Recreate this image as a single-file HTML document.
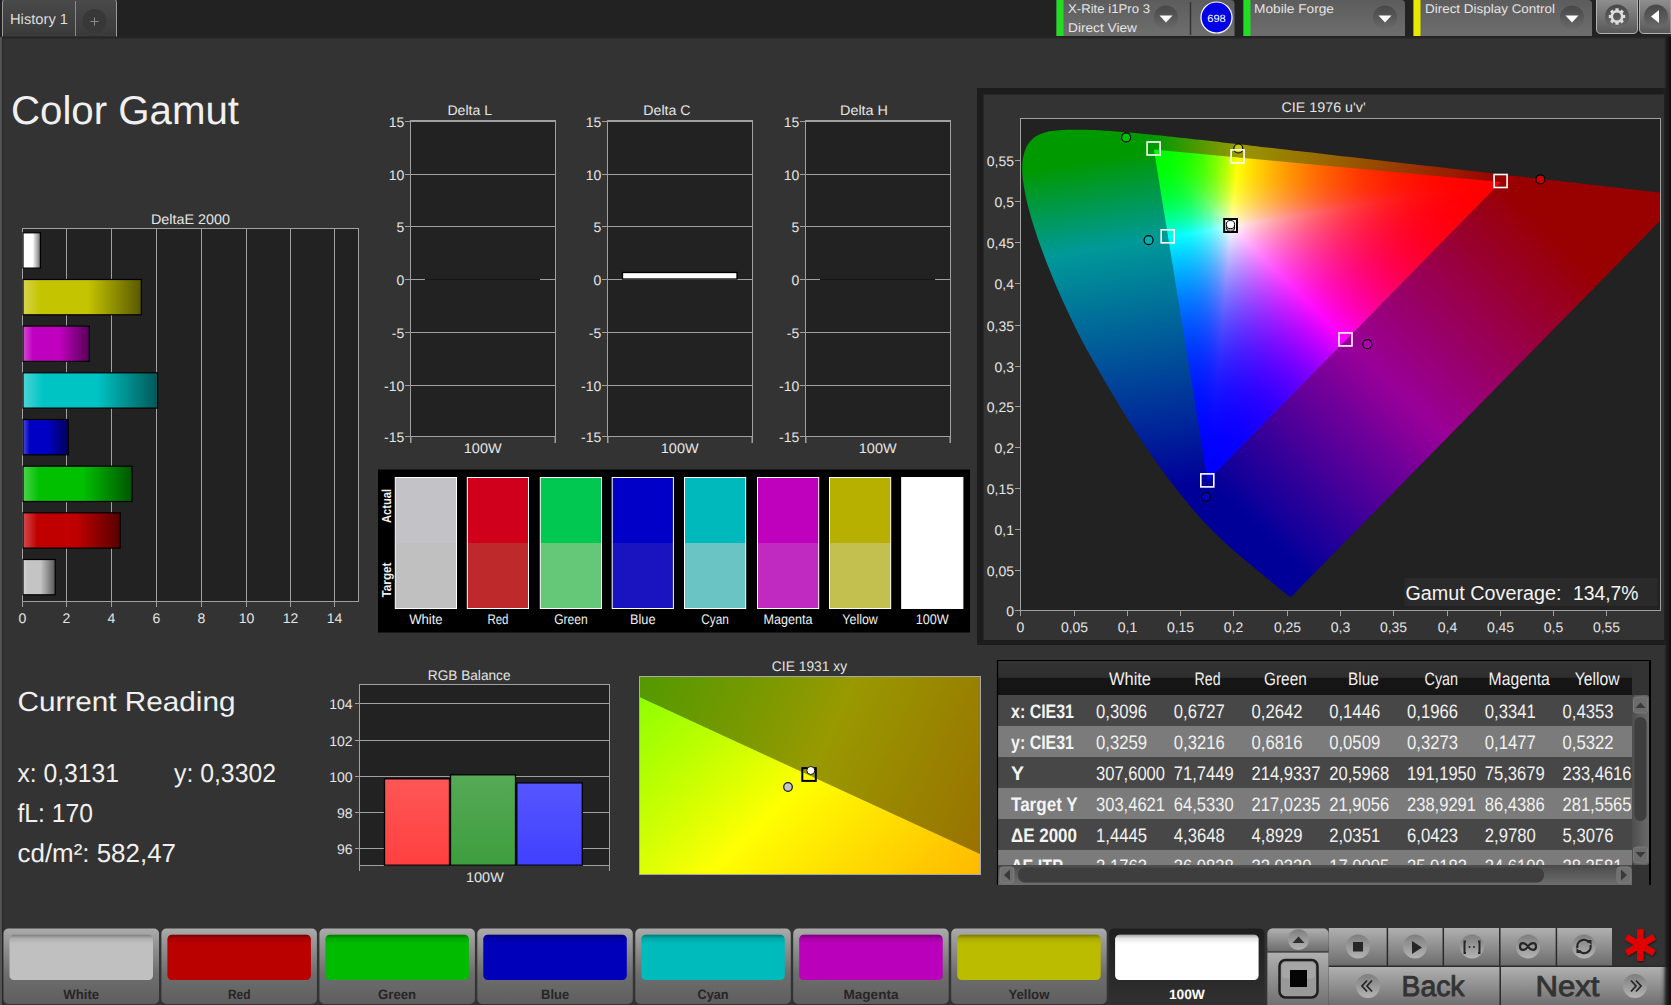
<!DOCTYPE html>
<html><head><meta charset="utf-8"><title>Color Gamut</title>
<style>
html,body{margin:0;padding:0;background:#333;}
body{width:1671px;height:1005px;overflow:hidden;position:relative;}
svg{position:absolute;left:0;top:0;}
#cie{position:absolute;left:1021px;top:119px;}
#xyc{position:absolute;left:640px;top:677px;}
</style></head><body>
<svg width="1671" height="1005" viewBox="0 0 1671 1005" font-family='"Liberation Sans", sans-serif' text-rendering="geometricPrecision"><defs><linearGradient id="tabg" x1="0" y1="0" x2="0" y2="1"><stop offset="0" stop-color="#4a4a4a"/><stop offset="1" stop-color="#3a3a3a"/></linearGradient><linearGradient id="devg" x1="0" y1="0" x2="0" y2="1"><stop offset="0" stop-color="#5c5c5c"/><stop offset="1" stop-color="#6e6e6e"/></linearGradient><radialGradient id="ddg" cx="0.5" cy="0.3" r="0.7"><stop offset="0" stop-color="#4a4a4a"/><stop offset="1" stop-color="#5e5e5e"/></radialGradient><linearGradient id="gbg" x1="0" y1="0" x2="0" y2="1"><stop offset="0" stop-color="#8e8e8e"/><stop offset="1" stop-color="#585858"/></linearGradient><linearGradient id="ddg2" x1="0" y1="0" x2="0" y2="1"><stop offset="0" stop-color="#474747"/><stop offset="1" stop-color="#6a6a6a"/></linearGradient><linearGradient id="btng" x1="0" y1="0" x2="0" y2="1"><stop offset="0" stop-color="#a9a9a9"/><stop offset="0.5" stop-color="#858585"/><stop offset="1" stop-color="#5c5c5c"/></linearGradient><linearGradient id="btnsel" x1="0" y1="0" x2="0" y2="1"><stop offset="0" stop-color="#1f1f1f"/><stop offset="1" stop-color="#2e2e2e"/></linearGradient><linearGradient id="ctlg" x1="0" y1="0" x2="0" y2="1"><stop offset="0" stop-color="#ababab"/><stop offset="1" stop-color="#6a6a6a"/></linearGradient><linearGradient id="icong" x1="0" y1="0" x2="0" y2="1"><stop offset="0" stop-color="#7a7a7a"/><stop offset="1" stop-color="#a8a8a8"/></linearGradient></defs><rect x="0" y="0" width="1671" height="1005" fill="#333333"/><rect x="0" y="0" width="1671" height="37" fill="#222222"/><rect x="0" y="37" width="2" height="968" fill="#555555"/><rect x="2" y="37" width="1" height="968" fill="#262626"/><rect x="2" y="37" width="1669" height="1.5" fill="#262626"/><defs><linearGradient id="redge" x1="0" y1="0" x2="1" y2="0"><stop offset="0" stop-color="#333" stop-opacity="0"/><stop offset="0.4" stop-color="#1a1a1a" stop-opacity="0.8"/><stop offset="1" stop-color="#0c0c0c"/></linearGradient></defs><path d="M2.5,36.5 L2.5,3 Q2.5,-1.5 7,-1.5 L112,-1.5 Q116.5,-1.5 116.5,3 L116.5,36.5" fill="url(#tabg)" stroke="#9a9a9a" stroke-width="1"/><line x1="75.5" y1="1" x2="75.5" y2="36" stroke="#8a8a8a" stroke-width="1"/><circle cx="94.5" cy="21" r="12" fill="#383838"/><line x1="90.5" y1="21.5" x2="98.5" y2="21.5" stroke="#8a8a8a" stroke-width="1"/><line x1="94.5" y1="17.5" x2="94.5" y2="25.5" stroke="#8a8a8a" stroke-width="1"/><text x="10.0" y="24.0" font-size="14.5" fill="#dddddd" textLength="58.0" lengthAdjust="spacingAndGlyphs">History 1</text><path d="M1056.5,36 L1056.5,0 L1230.5,0 Q1234.5,0 1234.5,4 L1234.5,36 Z" fill="url(#devg)"/><rect x="1056.5" y="0" width="7" height="36" fill="#22dd22"/><line x1="1190.5" y1="2" x2="1190.5" y2="35" stroke="#333333" stroke-width="1.5"/><circle cx="1166" cy="17.5" r="12" fill="url(#ddg2)"/><path d="M1159.5,15.5 L1172.5,15.5 L1166,22.5 Z" fill="#ffffff"/><circle cx="1216.5" cy="17.5" r="15.5" fill="#0000e6" stroke="#ffffff" stroke-width="1.2"/><text x="1216.5" y="21.5" font-size="10.5" fill="#ffffff" text-anchor="middle" textLength="18.5" lengthAdjust="spacingAndGlyphs">698</text><text x="1068.0" y="13.2" font-size="12.6" fill="#e4e4e4" textLength="82.0" lengthAdjust="spacingAndGlyphs">X-Rite i1Pro 3</text><text x="1068.0" y="32.0" font-size="12.6" fill="#e4e4e4" textLength="69.0" lengthAdjust="spacingAndGlyphs">Direct View</text><path d="M1243.5,36 L1243.5,0 L1401,0 Q1405,0 1405,4 L1405,36 Z" fill="url(#devg)"/><rect x="1243.5" y="0" width="7" height="36" fill="#22dd22"/><circle cx="1385" cy="17.5" r="12" fill="url(#ddg2)"/><path d="M1378.5,15.5 L1391.5,15.5 L1385,22.5 Z" fill="#ffffff"/><text x="1254.0" y="13.0" font-size="12.6" fill="#e4e4e4" textLength="80.0" lengthAdjust="spacingAndGlyphs">Mobile Forge</text><path d="M1413.5,36 L1413.5,0 L1588,0 Q1592,0 1592,4 L1592,36 Z" fill="url(#devg)"/><rect x="1413.5" y="0" width="7" height="36" fill="#e8e800"/><circle cx="1572" cy="17.5" r="12" fill="url(#ddg2)"/><path d="M1565.5,15.5 L1578.5,15.5 L1572,22.5 Z" fill="#ffffff"/><text x="1425.0" y="13.0" font-size="12.6" fill="#e4e4e4" textLength="130.0" lengthAdjust="spacingAndGlyphs">Direct Display Control</text><path d="M1596.5,0 L1596.5,29 Q1596.5,33.5 1601,33.5 L1633,33.5 Q1637.5,33.5 1637.5,29 L1637.5,0" fill="url(#gbg)" stroke="#b0b0b0" stroke-width="1"/><circle cx="1617" cy="16.5" r="12" fill="url(#ddg2)"/><path d="M1639.5,0 L1639.5,29 Q1639.5,33.5 1644,33.5 L1671,33.5 L1671,0" fill="url(#gbg)" stroke="#b0b0b0" stroke-width="1"/><circle cx="1656" cy="16.5" r="12" fill="url(#ddg2)"/><path d="M1651,16.5 L1659,10 L1659,23 Z" fill="#ffffff"/><rect x="1615.40" y="8.30" width="3.2" height="4" fill="#dddddd" transform="rotate(0 1617 16.5)"/><rect x="1615.40" y="8.30" width="3.2" height="4" fill="#dddddd" transform="rotate(45 1617 16.5)"/><rect x="1615.40" y="8.30" width="3.2" height="4" fill="#dddddd" transform="rotate(90 1617 16.5)"/><rect x="1615.40" y="8.30" width="3.2" height="4" fill="#dddddd" transform="rotate(135 1617 16.5)"/><rect x="1615.40" y="8.30" width="3.2" height="4" fill="#dddddd" transform="rotate(180 1617 16.5)"/><rect x="1615.40" y="8.30" width="3.2" height="4" fill="#dddddd" transform="rotate(225 1617 16.5)"/><rect x="1615.40" y="8.30" width="3.2" height="4" fill="#dddddd" transform="rotate(270 1617 16.5)"/><rect x="1615.40" y="8.30" width="3.2" height="4" fill="#dddddd" transform="rotate(315 1617 16.5)"/><circle cx="1617" cy="16.5" r="5.2" fill="none" stroke="#dddddd" stroke-width="2.6"/><text x="11.0" y="124.0" font-size="40" fill="#f0f0f0" textLength="228.0" lengthAdjust="spacingAndGlyphs">Color Gamut</text><text x="151.0" y="223.8" font-size="14" fill="#e4e4e4" textLength="79.0" lengthAdjust="spacingAndGlyphs">DeltaE 2000</text><rect x="22" y="228" width="336" height="373" fill="#222222"/><rect x="66" y="228" width="1" height="373" fill="#a0a0a0"/><rect x="111" y="228" width="1" height="373" fill="#a0a0a0"/><rect x="156" y="228" width="1" height="373" fill="#a0a0a0"/><rect x="201" y="228" width="1" height="373" fill="#a0a0a0"/><rect x="246" y="228" width="1" height="373" fill="#a0a0a0"/><rect x="290" y="228" width="1" height="373" fill="#a0a0a0"/><rect x="334" y="228" width="1" height="373" fill="#a0a0a0"/><rect x="22" y="228" width="337" height="1" fill="#a0a0a0"/><rect x="22" y="601" width="337" height="1" fill="#a0a0a0"/><rect x="22" y="228" width="1" height="374" fill="#a0a0a0"/><rect x="358" y="228" width="1" height="374" fill="#a0a0a0"/><rect x="22" y="601" width="1" height="6" fill="#a0a0a0"/><text x="22.5" y="622.5" font-size="14" fill="#e4e4e4" text-anchor="middle">0</text><rect x="66" y="601" width="1" height="6" fill="#a0a0a0"/><text x="66.5" y="622.5" font-size="14" fill="#e4e4e4" text-anchor="middle">2</text><rect x="111" y="601" width="1" height="6" fill="#a0a0a0"/><text x="111.5" y="622.5" font-size="14" fill="#e4e4e4" text-anchor="middle">4</text><rect x="156" y="601" width="1" height="6" fill="#a0a0a0"/><text x="156.5" y="622.5" font-size="14" fill="#e4e4e4" text-anchor="middle">6</text><rect x="201" y="601" width="1" height="6" fill="#a0a0a0"/><text x="201.5" y="622.5" font-size="14" fill="#e4e4e4" text-anchor="middle">8</text><rect x="246" y="601" width="1" height="6" fill="#a0a0a0"/><text x="246.5" y="622.5" font-size="14" fill="#e4e4e4" text-anchor="middle">10</text><rect x="290" y="601" width="1" height="6" fill="#a0a0a0"/><text x="290.5" y="622.5" font-size="14" fill="#e4e4e4" text-anchor="middle">12</text><rect x="334" y="601" width="1" height="6" fill="#a0a0a0"/><text x="334.5" y="622.5" font-size="14" fill="#e4e4e4" text-anchor="middle">14</text><defs><linearGradient id="deb0" x1="0" y1="0" x2="1" y2="0"><stop offset="0" stop-color="#ffffff"/><stop offset="0.15" stop-color="#ffffff"/><stop offset="0.55" stop-color="#ffffff"/><stop offset="1" stop-color="#727272"/></linearGradient><linearGradient id="deb1" x1="0" y1="0" x2="1" y2="0"><stop offset="0" stop-color="#d5d54c"/><stop offset="0.15" stop-color="#c4c400"/><stop offset="0.55" stop-color="#c4c400"/><stop offset="1" stop-color="#585800"/></linearGradient><linearGradient id="deb2" x1="0" y1="0" x2="1" y2="0"><stop offset="0" stop-color="#d24cd2"/><stop offset="0.15" stop-color="#c000c0"/><stop offset="0.55" stop-color="#c000c0"/><stop offset="1" stop-color="#560056"/></linearGradient><linearGradient id="deb3" x1="0" y1="0" x2="1" y2="0"><stop offset="0" stop-color="#4cd5d5"/><stop offset="0.15" stop-color="#00c4c4"/><stop offset="0.55" stop-color="#00c4c4"/><stop offset="1" stop-color="#005858"/></linearGradient><linearGradient id="deb4" x1="0" y1="0" x2="1" y2="0"><stop offset="0" stop-color="#4c4cd5"/><stop offset="0.15" stop-color="#0000c4"/><stop offset="0.55" stop-color="#0000c4"/><stop offset="1" stop-color="#000058"/></linearGradient><linearGradient id="deb5" x1="0" y1="0" x2="1" y2="0"><stop offset="0" stop-color="#4cd24c"/><stop offset="0.15" stop-color="#00c000"/><stop offset="0.55" stop-color="#00c000"/><stop offset="1" stop-color="#005600"/></linearGradient><linearGradient id="deb6" x1="0" y1="0" x2="1" y2="0"><stop offset="0" stop-color="#d24c4c"/><stop offset="0.15" stop-color="#c00000"/><stop offset="0.55" stop-color="#c00000"/><stop offset="1" stop-color="#560000"/></linearGradient><linearGradient id="deb7" x1="0" y1="0" x2="1" y2="0"><stop offset="0" stop-color="#d5d5d5"/><stop offset="0.15" stop-color="#c4c4c4"/><stop offset="0.55" stop-color="#c4c4c4"/><stop offset="1" stop-color="#585858"/></linearGradient></defs><rect x="23.0" y="232.8" width="17.4" height="35.3" fill="url(#deb0)" stroke="#000" stroke-width="1.2"/><rect x="23.0" y="279.5" width="118.3" height="35.3" fill="url(#deb1)" stroke="#000" stroke-width="1.2"/><rect x="23.0" y="326.1" width="66.3" height="35.3" fill="url(#deb2)" stroke="#000" stroke-width="1.2"/><rect x="23.0" y="372.8" width="134.6" height="35.3" fill="url(#deb3)" stroke="#000" stroke-width="1.2"/><rect x="23.0" y="419.5" width="45.3" height="35.3" fill="url(#deb4)" stroke="#000" stroke-width="1.2"/><rect x="23.0" y="466.2" width="109.0" height="35.3" fill="url(#deb5)" stroke="#000" stroke-width="1.2"/><rect x="23.0" y="512.8" width="97.2" height="35.3" fill="url(#deb6)" stroke="#000" stroke-width="1.2"/><rect x="23.0" y="559.5" width="32.2" height="35.3" fill="url(#deb7)" stroke="#000" stroke-width="1.2"/><text x="447.4" y="114.7" font-size="14" fill="#e4e4e4" textLength="44.6" lengthAdjust="spacingAndGlyphs">Delta L</text><rect x="410" y="120" width="145" height="316" fill="#222222"/><rect x="410" y="121" width="145" height="1" fill="#a0a0a0"/><rect x="405" y="121" width="5" height="1" fill="#a0a0a0"/><text x="404.3" y="126.5" font-size="14" fill="#e4e4e4" text-anchor="end">15</text><rect x="410" y="174" width="145" height="1" fill="#a0a0a0"/><rect x="405" y="174" width="5" height="1" fill="#a0a0a0"/><text x="404.3" y="179.5" font-size="14" fill="#e4e4e4" text-anchor="end">10</text><rect x="410" y="226" width="145" height="1" fill="#a0a0a0"/><rect x="405" y="226" width="5" height="1" fill="#a0a0a0"/><text x="404.3" y="231.5" font-size="14" fill="#e4e4e4" text-anchor="end">5</text><rect x="410" y="279" width="145" height="1" fill="#a0a0a0"/><rect x="405" y="279" width="5" height="1" fill="#a0a0a0"/><text x="404.3" y="284.5" font-size="14" fill="#e4e4e4" text-anchor="end">0</text><rect x="410" y="332" width="145" height="1" fill="#a0a0a0"/><rect x="405" y="332" width="5" height="1" fill="#a0a0a0"/><text x="404.3" y="337.5" font-size="14" fill="#e4e4e4" text-anchor="end">-5</text><rect x="410" y="385" width="145" height="1" fill="#a0a0a0"/><rect x="405" y="385" width="5" height="1" fill="#a0a0a0"/><text x="404.3" y="390.5" font-size="14" fill="#e4e4e4" text-anchor="end">-10</text><rect x="410" y="436" width="145" height="1" fill="#a0a0a0"/><rect x="405" y="436" width="5" height="1" fill="#a0a0a0"/><text x="404.3" y="441.5" font-size="14" fill="#e4e4e4" text-anchor="end">-15</text><rect x="410" y="120" width="146" height="1" fill="#a0a0a0"/><rect x="410" y="436" width="146" height="1" fill="#a0a0a0"/><rect x="410" y="120" width="1" height="317" fill="#a0a0a0"/><rect x="555" y="120" width="1" height="317" fill="#a0a0a0"/><rect x="410" y="437" width="1.5" height="6" fill="#a0a0a0"/><rect x="554.5" y="437" width="1.5" height="6" fill="#a0a0a0"/><text x="463.8" y="452.8" font-size="14" fill="#e4e4e4" textLength="37.8" lengthAdjust="spacingAndGlyphs">100W</text><rect x="425" y="279" width="115" height="1" fill="#151515"/><text x="643.3" y="114.7" font-size="14" fill="#e4e4e4" textLength="47.3" lengthAdjust="spacingAndGlyphs">Delta C</text><rect x="607" y="120" width="145" height="316" fill="#222222"/><rect x="607" y="121" width="145" height="1" fill="#a0a0a0"/><rect x="602" y="121" width="5" height="1" fill="#a0a0a0"/><text x="601.3" y="126.5" font-size="14" fill="#e4e4e4" text-anchor="end">15</text><rect x="607" y="174" width="145" height="1" fill="#a0a0a0"/><rect x="602" y="174" width="5" height="1" fill="#a0a0a0"/><text x="601.3" y="179.5" font-size="14" fill="#e4e4e4" text-anchor="end">10</text><rect x="607" y="226" width="145" height="1" fill="#a0a0a0"/><rect x="602" y="226" width="5" height="1" fill="#a0a0a0"/><text x="601.3" y="231.5" font-size="14" fill="#e4e4e4" text-anchor="end">5</text><rect x="607" y="279" width="145" height="1" fill="#a0a0a0"/><rect x="602" y="279" width="5" height="1" fill="#a0a0a0"/><text x="601.3" y="284.5" font-size="14" fill="#e4e4e4" text-anchor="end">0</text><rect x="607" y="332" width="145" height="1" fill="#a0a0a0"/><rect x="602" y="332" width="5" height="1" fill="#a0a0a0"/><text x="601.3" y="337.5" font-size="14" fill="#e4e4e4" text-anchor="end">-5</text><rect x="607" y="385" width="145" height="1" fill="#a0a0a0"/><rect x="602" y="385" width="5" height="1" fill="#a0a0a0"/><text x="601.3" y="390.5" font-size="14" fill="#e4e4e4" text-anchor="end">-10</text><rect x="607" y="436" width="145" height="1" fill="#a0a0a0"/><rect x="602" y="436" width="5" height="1" fill="#a0a0a0"/><text x="601.3" y="441.5" font-size="14" fill="#e4e4e4" text-anchor="end">-15</text><rect x="607" y="120" width="146" height="1" fill="#a0a0a0"/><rect x="607" y="436" width="146" height="1" fill="#a0a0a0"/><rect x="607" y="120" width="1" height="317" fill="#a0a0a0"/><rect x="752" y="120" width="1" height="317" fill="#a0a0a0"/><rect x="607" y="437" width="1.5" height="6" fill="#a0a0a0"/><rect x="751.5" y="437" width="1.5" height="6" fill="#a0a0a0"/><text x="660.8" y="452.8" font-size="14" fill="#e4e4e4" textLength="37.8" lengthAdjust="spacingAndGlyphs">100W</text><rect x="622.5" y="272.5" width="114.5" height="6.5" fill="#ffffff" stroke="#000" stroke-width="1.3"/><text x="840.0" y="114.7" font-size="14" fill="#e4e4e4" textLength="48.0" lengthAdjust="spacingAndGlyphs">Delta H</text><rect x="805" y="120" width="145" height="316" fill="#222222"/><rect x="805" y="121" width="145" height="1" fill="#a0a0a0"/><rect x="800" y="121" width="5" height="1" fill="#a0a0a0"/><text x="799.3" y="126.5" font-size="14" fill="#e4e4e4" text-anchor="end">15</text><rect x="805" y="174" width="145" height="1" fill="#a0a0a0"/><rect x="800" y="174" width="5" height="1" fill="#a0a0a0"/><text x="799.3" y="179.5" font-size="14" fill="#e4e4e4" text-anchor="end">10</text><rect x="805" y="226" width="145" height="1" fill="#a0a0a0"/><rect x="800" y="226" width="5" height="1" fill="#a0a0a0"/><text x="799.3" y="231.5" font-size="14" fill="#e4e4e4" text-anchor="end">5</text><rect x="805" y="279" width="145" height="1" fill="#a0a0a0"/><rect x="800" y="279" width="5" height="1" fill="#a0a0a0"/><text x="799.3" y="284.5" font-size="14" fill="#e4e4e4" text-anchor="end">0</text><rect x="805" y="332" width="145" height="1" fill="#a0a0a0"/><rect x="800" y="332" width="5" height="1" fill="#a0a0a0"/><text x="799.3" y="337.5" font-size="14" fill="#e4e4e4" text-anchor="end">-5</text><rect x="805" y="385" width="145" height="1" fill="#a0a0a0"/><rect x="800" y="385" width="5" height="1" fill="#a0a0a0"/><text x="799.3" y="390.5" font-size="14" fill="#e4e4e4" text-anchor="end">-10</text><rect x="805" y="436" width="145" height="1" fill="#a0a0a0"/><rect x="800" y="436" width="5" height="1" fill="#a0a0a0"/><text x="799.3" y="441.5" font-size="14" fill="#e4e4e4" text-anchor="end">-15</text><rect x="805" y="120" width="146" height="1" fill="#a0a0a0"/><rect x="805" y="436" width="146" height="1" fill="#a0a0a0"/><rect x="805" y="120" width="1" height="317" fill="#a0a0a0"/><rect x="950" y="120" width="1" height="317" fill="#a0a0a0"/><rect x="805" y="437" width="1.5" height="6" fill="#a0a0a0"/><rect x="949.5" y="437" width="1.5" height="6" fill="#a0a0a0"/><text x="858.8" y="452.8" font-size="14" fill="#e4e4e4" textLength="37.8" lengthAdjust="spacingAndGlyphs">100W</text><rect x="820" y="279" width="115" height="1" fill="#151515"/><rect x="378" y="469.5" width="592" height="163" fill="#000000"/><rect x="395.3" y="477.5" width="61.2" height="65.5" fill="#c3c3c7"/><rect x="395.3" y="543" width="61.2" height="65.5" fill="#c0c0c0"/><rect x="395.3" y="477.5" width="61.2" height="131" fill="none" stroke="#ffffff" stroke-width="1"/><text x="425.9" y="624.0" font-size="14" fill="#f0f0f0" text-anchor="middle" textLength="33.5" lengthAdjust="spacingAndGlyphs">White</text><rect x="467.3" y="477.5" width="61.2" height="65.5" fill="#d0001c"/><rect x="467.3" y="543" width="61.2" height="65.5" fill="#be2a2c"/><rect x="467.3" y="477.5" width="61.2" height="131" fill="none" stroke="#ffffff" stroke-width="1"/><text x="497.9" y="624.0" font-size="14" fill="#f0f0f0" text-anchor="middle" textLength="21.0" lengthAdjust="spacingAndGlyphs">Red</text><rect x="540.3" y="477.5" width="61.2" height="65.5" fill="#00c850"/><rect x="540.3" y="543" width="61.2" height="65.5" fill="#64c878"/><rect x="540.3" y="477.5" width="61.2" height="131" fill="none" stroke="#ffffff" stroke-width="1"/><text x="570.9" y="624.0" font-size="14" fill="#f0f0f0" text-anchor="middle" textLength="33.5" lengthAdjust="spacingAndGlyphs">Green</text><rect x="612.2" y="477.5" width="61.2" height="65.5" fill="#0000c8"/><rect x="612.2" y="543" width="61.2" height="65.5" fill="#1a14c0"/><rect x="612.2" y="477.5" width="61.2" height="131" fill="none" stroke="#ffffff" stroke-width="1"/><text x="642.8" y="624.0" font-size="14" fill="#f0f0f0" text-anchor="middle" textLength="25.5" lengthAdjust="spacingAndGlyphs">Blue</text><rect x="684.5" y="477.5" width="61.2" height="65.5" fill="#00b9bc"/><rect x="684.5" y="543" width="61.2" height="65.5" fill="#6ac4c4"/><rect x="684.5" y="477.5" width="61.2" height="131" fill="none" stroke="#ffffff" stroke-width="1"/><text x="715.1" y="624.0" font-size="14" fill="#f0f0f0" text-anchor="middle" textLength="27.5" lengthAdjust="spacingAndGlyphs">Cyan</text><rect x="757.5" y="477.5" width="61.2" height="65.5" fill="#bf00bc"/><rect x="757.5" y="543" width="61.2" height="65.5" fill="#c02ac0"/><rect x="757.5" y="477.5" width="61.2" height="131" fill="none" stroke="#ffffff" stroke-width="1"/><text x="788.1" y="624.0" font-size="14" fill="#f0f0f0" text-anchor="middle" textLength="49.0" lengthAdjust="spacingAndGlyphs">Magenta</text><rect x="829.5" y="477.5" width="61.2" height="65.5" fill="#b8b000"/><rect x="829.5" y="543" width="61.2" height="65.5" fill="#c4c050"/><rect x="829.5" y="477.5" width="61.2" height="131" fill="none" stroke="#ffffff" stroke-width="1"/><text x="860.1" y="624.0" font-size="14" fill="#f0f0f0" text-anchor="middle" textLength="35.5" lengthAdjust="spacingAndGlyphs">Yellow</text><rect x="901.7" y="477.5" width="61.2" height="65.5" fill="#ffffff"/><rect x="901.7" y="543" width="61.2" height="65.5" fill="#ffffff"/><rect x="901.7" y="477.5" width="61.2" height="131" fill="none" stroke="#ffffff" stroke-width="1"/><text x="932.3" y="624.0" font-size="14" fill="#f0f0f0" text-anchor="middle" textLength="33.0" lengthAdjust="spacingAndGlyphs">100W</text><text x="0.0" y="0.0" font-size="13" fill="#f0f0f0" font-weight="bold" textLength="34.0" lengthAdjust="spacingAndGlyphs" transform="translate(391,523) rotate(-90)">Actual</text><text x="0.0" y="0.0" font-size="13" fill="#f0f0f0" font-weight="bold" textLength="35.0" lengthAdjust="spacingAndGlyphs" transform="translate(391,597.5) rotate(-90)">Target</text><rect x="977" y="88" width="690" height="557" fill="#1c1c1c"/><rect x="983.5" y="94.5" width="680.5" height="545.5" fill="#333333"/><text x="1281.4" y="112.0" font-size="14" fill="#e4e4e4" textLength="84.3" lengthAdjust="spacingAndGlyphs">CIE 1976 u'v'</text><rect x="1020" y="118" width="641" height="493" fill="#222222"/><rect x="1015" y="610" width="5" height="1" fill="#a0a0a0"/><text x="1014.0" y="615.5" font-size="14" fill="#e4e4e4" text-anchor="end">0</text><rect x="1015" y="570" width="5" height="1" fill="#a0a0a0"/><text x="1014.0" y="575.5" font-size="14" fill="#e4e4e4" text-anchor="end">0,05</text><rect x="1015" y="529" width="5" height="1" fill="#a0a0a0"/><text x="1014.0" y="534.5" font-size="14" fill="#e4e4e4" text-anchor="end">0,1</text><rect x="1015" y="488" width="5" height="1" fill="#a0a0a0"/><text x="1014.0" y="493.5" font-size="14" fill="#e4e4e4" text-anchor="end">0,15</text><rect x="1015" y="447" width="5" height="1" fill="#a0a0a0"/><text x="1014.0" y="452.5" font-size="14" fill="#e4e4e4" text-anchor="end">0,2</text><rect x="1015" y="406" width="5" height="1" fill="#a0a0a0"/><text x="1014.0" y="411.5" font-size="14" fill="#e4e4e4" text-anchor="end">0,25</text><rect x="1015" y="366" width="5" height="1" fill="#a0a0a0"/><text x="1014.0" y="371.5" font-size="14" fill="#e4e4e4" text-anchor="end">0,3</text><rect x="1015" y="325" width="5" height="1" fill="#a0a0a0"/><text x="1014.0" y="330.5" font-size="14" fill="#e4e4e4" text-anchor="end">0,35</text><rect x="1015" y="283" width="5" height="1" fill="#a0a0a0"/><text x="1014.0" y="288.5" font-size="14" fill="#e4e4e4" text-anchor="end">0,4</text><rect x="1015" y="242" width="5" height="1" fill="#a0a0a0"/><text x="1014.0" y="247.5" font-size="14" fill="#e4e4e4" text-anchor="end">0,45</text><rect x="1015" y="201" width="5" height="1" fill="#a0a0a0"/><text x="1014.0" y="206.5" font-size="14" fill="#e4e4e4" text-anchor="end">0,5</text><rect x="1015" y="160" width="5" height="1" fill="#a0a0a0"/><text x="1014.0" y="165.5" font-size="14" fill="#e4e4e4" text-anchor="end">0,55</text><rect x="1020" y="611" width="1" height="5" fill="#a0a0a0"/><text x="1020.5" y="632.0" font-size="14" fill="#e4e4e4" text-anchor="middle">0</text><rect x="1074" y="611" width="1" height="5" fill="#a0a0a0"/><text x="1074.5" y="632.0" font-size="14" fill="#e4e4e4" text-anchor="middle">0,05</text><rect x="1127" y="611" width="1" height="5" fill="#a0a0a0"/><text x="1127.5" y="632.0" font-size="14" fill="#e4e4e4" text-anchor="middle">0,1</text><rect x="1180" y="611" width="1" height="5" fill="#a0a0a0"/><text x="1180.5" y="632.0" font-size="14" fill="#e4e4e4" text-anchor="middle">0,15</text><rect x="1233" y="611" width="1" height="5" fill="#a0a0a0"/><text x="1233.5" y="632.0" font-size="14" fill="#e4e4e4" text-anchor="middle">0,2</text><rect x="1287" y="611" width="1" height="5" fill="#a0a0a0"/><text x="1287.5" y="632.0" font-size="14" fill="#e4e4e4" text-anchor="middle">0,25</text><rect x="1340" y="611" width="1" height="5" fill="#a0a0a0"/><text x="1340.5" y="632.0" font-size="14" fill="#e4e4e4" text-anchor="middle">0,3</text><rect x="1393" y="611" width="1" height="5" fill="#a0a0a0"/><text x="1393.5" y="632.0" font-size="14" fill="#e4e4e4" text-anchor="middle">0,35</text><rect x="1447" y="611" width="1" height="5" fill="#a0a0a0"/><text x="1447.5" y="632.0" font-size="14" fill="#e4e4e4" text-anchor="middle">0,4</text><rect x="1500" y="611" width="1" height="5" fill="#a0a0a0"/><text x="1500.5" y="632.0" font-size="14" fill="#e4e4e4" text-anchor="middle">0,45</text><rect x="1553" y="611" width="1" height="5" fill="#a0a0a0"/><text x="1553.5" y="632.0" font-size="14" fill="#e4e4e4" text-anchor="middle">0,5</text><rect x="1606" y="611" width="1" height="5" fill="#a0a0a0"/><text x="1606.5" y="632.0" font-size="14" fill="#e4e4e4" text-anchor="middle">0,55</text><rect x="1020" y="118" width="641" height="1" fill="#a0a0a0"/><rect x="1020" y="610" width="641" height="1" fill="#a0a0a0"/><rect x="1020" y="118" width="1" height="493" fill="#a0a0a0"/><rect x="1660" y="118" width="1" height="493" fill="#a0a0a0"/><defs><linearGradient id="fbg" x1="0" y1="0" x2="1" y2="1"><stop offset="0" stop-color="#10a010"/><stop offset="0.45" stop-color="#e0e0e0"/><stop offset="1" stop-color="#8000a0"/></linearGradient><clipPath id="plotclip"><rect x="1021" y="119" width="639" height="491"/></clipPath></defs><defs><clipPath id="locusclip"><polygon points="1291.0,597.3 1290.8,597.2 1290.6,597.1 1290.4,597.0 1290.1,596.9 1289.8,596.7 1289.4,596.5 1289.0,596.3 1288.6,596.0 1288.2,595.7 1287.7,595.4 1287.2,595.0 1286.6,594.7 1286.1,594.3 1285.5,593.8 1284.9,593.4 1284.3,592.9 1283.6,592.4 1282.9,591.8 1282.1,591.2 1281.3,590.5 1280.4,589.8 1279.5,589.1 1278.5,588.3 1277.5,587.4 1276.5,586.6 1275.4,585.7 1274.3,584.7 1273.2,583.7 1272.0,582.7 1270.7,581.7 1269.4,580.6 1268.1,579.5 1266.7,578.3 1265.3,577.2 1263.8,575.9 1262.2,574.6 1260.5,573.2 1258.7,571.8 1256.8,570.2 1254.9,568.7 1252.9,567.1 1250.9,565.4 1248.8,563.7 1246.7,561.9 1244.5,560.1 1242.2,558.2 1239.8,556.2 1237.4,554.1 1234.8,551.8 1232.2,549.5 1229.4,547.1 1226.6,544.6 1223.7,541.9 1220.7,539.1 1217.7,536.1 1214.6,533.1 1211.4,530.0 1208.0,526.6 1204.5,522.9 1200.7,518.8 1196.8,514.3 1192.6,509.4 1188.2,504.3 1183.7,498.8 1179.0,493.0 1174.2,486.9 1169.3,480.4 1164.3,473.6 1159.1,466.4 1153.8,459.0 1148.4,451.2 1142.9,443.2 1137.4,434.8 1131.8,426.0 1126.1,417.0 1120.3,407.7 1114.6,398.3 1109.0,388.9 1103.4,379.3 1097.7,369.5 1092.1,359.6 1086.6,349.7 1081.3,339.8 1076.3,330.1 1071.6,320.5 1067.0,310.8 1062.6,301.2 1058.4,291.8 1054.5,282.6 1050.8,273.7 1047.3,265.1 1044.1,256.8 1041.1,248.6 1038.3,240.8 1035.8,233.3 1033.5,226.2 1031.4,219.4 1029.6,213.1 1028.0,207.1 1026.7,201.3 1025.5,195.9 1024.5,190.8 1023.7,186.0 1023.1,181.5 1022.6,177.4 1022.4,173.4 1022.3,169.7 1022.3,166.2 1022.5,162.9 1022.9,159.8 1023.4,156.9 1024.1,154.2 1024.8,151.7 1025.7,149.3 1026.8,147.1 1028.0,145.1 1029.3,143.2 1030.7,141.5 1032.3,140.0 1033.9,138.6 1035.6,137.3 1037.4,136.2 1039.3,135.3 1041.3,134.5 1043.3,133.7 1045.4,133.1 1047.6,132.5 1049.8,132.1 1052.1,131.8 1054.4,131.5 1056.8,131.3 1059.1,131.1 1061.6,130.9 1064.0,130.8 1066.5,130.7 1069.1,130.6 1071.6,130.6 1074.1,130.6 1076.6,130.6 1079.1,130.6 1081.7,130.6 1084.2,130.6 1086.7,130.7 1089.3,130.8 1091.9,130.8 1094.5,130.9 1097.1,131.1 1099.8,131.2 1102.5,131.3 1105.2,131.5 1107.9,131.7 1110.7,131.9 1113.5,132.1 1116.4,132.3 1119.3,132.5 1122.3,132.7 1125.2,133.0 1128.3,133.2 1131.3,133.5 1134.4,133.8 1137.6,134.1 1140.8,134.4 1144.1,134.7 1147.4,135.0 1150.8,135.4 1154.2,135.7 1157.7,136.1 1161.2,136.5 1164.8,136.8 1168.5,137.2 1172.3,137.6 1176.1,138.0 1179.9,138.4 1183.9,138.9 1187.9,139.3 1191.9,139.8 1196.0,140.2 1200.2,140.7 1204.5,141.2 1208.9,141.7 1213.3,142.2 1217.8,142.7 1222.4,143.2 1227.0,143.7 1231.8,144.2 1236.6,144.8 1241.4,145.3 1246.4,145.9 1251.4,146.5 1256.5,147.1 1261.7,147.7 1267.0,148.3 1272.3,148.9 1277.8,149.5 1283.3,150.1 1288.8,150.8 1294.5,151.4 1300.2,152.1 1306.0,152.7 1311.9,153.4 1317.8,154.1 1323.8,154.8 1329.9,155.5 1336.0,156.2 1342.2,156.9 1348.4,157.6 1354.7,158.3 1361.1,159.1 1367.5,159.8 1373.9,160.5 1380.3,161.3 1386.8,162.0 1393.3,162.8 1399.9,163.5 1406.4,164.3 1412.8,165.0 1419.2,165.7 1425.5,166.5 1431.8,167.2 1438.0,167.9 1444.3,168.6 1450.5,169.3 1456.7,170.1 1462.9,170.8 1469.1,171.5 1475.3,172.2 1481.3,172.9 1487.2,173.5 1493.0,174.2 1498.7,174.9 1504.3,175.5 1509.8,176.1 1515.2,176.7 1520.5,177.3 1525.6,177.9 1530.7,178.5 1535.7,179.1 1540.5,179.6 1545.3,180.2 1549.9,180.7 1554.3,181.2 1558.7,181.7 1562.9,182.2 1567.0,182.7 1571.0,183.2 1574.9,183.6 1578.6,184.0 1582.3,184.4 1585.8,184.8 1589.2,185.2 1592.6,185.6 1595.8,186.0 1599.0,186.3 1602.0,186.7 1605.0,187.0 1607.9,187.4 1610.7,187.7 1613.5,188.0 1616.2,188.3 1618.8,188.6 1621.4,188.9 1623.9,189.2 1626.4,189.5 1628.8,189.8 1631.1,190.1 1633.4,190.3 1635.6,190.6 1637.7,190.8 1639.7,191.0 1641.7,191.3 1643.6,191.5 1645.5,191.7 1647.3,191.9 1649.0,192.1 1650.6,192.3 1652.2,192.4 1653.7,192.6 1655.2,192.8 1656.5,192.9 1657.8,193.1 1659.1,193.2 1660.3,193.4 1661.5,193.5 1662.6,193.6 1663.7,193.8 1664.7,193.9 1665.7,194.0 1666.7,194.1 1667.6,194.2 1668.4,194.3 1669.2,194.4 1670.0,194.5 1670.7,194.6 1671.4,194.7 1672.0,194.7 1672.6,194.8 1673.1,194.9 1673.5,194.9 1674.0,195.0 1674.5,195.0 1674.9,195.1 1675.4,195.1 1675.8,195.2 1676.2,195.2 1676.6,195.3 1677.0,195.3 1677.4,195.3 1677.7,195.4 1678.0,195.4 1678.4,195.5 1678.7,195.5 1679.0,195.5 1679.3,195.6 1679.7,195.6 1680.0,195.7 1680.3,195.7 1680.7,195.7 1681.0,195.8 1681.3,195.8 1681.6,195.8 1681.9,195.9 1682.2,195.9 1682.5,195.9 1682.7,196.0 1682.9,196.0 1683.2,196.0 1683.3,196.0 1683.5,196.1 1683.7,196.1 1683.9,196.1 1684.0,196.1 1684.1,196.1 1684.2,196.1 1684.3,196.1 1684.4,196.2 1684.4,196.2 1684.5,196.2 1684.6,196.2 1684.6,196.2 1684.6,196.2 1684.7,196.2 1684.7,196.2"/></clipPath><filter id="fbblur" filterUnits="userSpaceOnUse" x="1000" y="100" width="680" height="530"><feGaussianBlur stdDeviation="3.5"/></filter></defs><g id="fallback" clip-path="url(#plotclip)"><g clip-path="url(#locusclip)"><g filter="url(#fbblur)"><rect x="1037" y="127" width="120" height="8" fill="#090"/><rect x="1029" y="135" width="128" height="8" fill="#090"/><rect x="1157" y="135" width="16" height="8" fill="#190"/><rect x="1173" y="135" width="8" height="8" fill="#290"/><rect x="1181" y="135" width="8" height="8" fill="#390"/><rect x="1189" y="135" width="8" height="8" fill="#490"/><rect x="1197" y="135" width="8" height="8" fill="#590"/><rect x="1205" y="135" width="8" height="8" fill="#690"/><rect x="1213" y="135" width="16" height="8" fill="#790"/><rect x="1021" y="143" width="136" height="8" fill="#090"/><rect x="1157" y="143" width="8" height="8" fill="#1a0"/><rect x="1165" y="143" width="16" height="8" fill="#290"/><rect x="1181" y="143" width="8" height="8" fill="#390"/><rect x="1189" y="143" width="8" height="8" fill="#490"/><rect x="1197" y="143" width="8" height="8" fill="#590"/><rect x="1205" y="143" width="8" height="8" fill="#690"/><rect x="1213" y="143" width="8" height="8" fill="#790"/><rect x="1221" y="143" width="16" height="8" fill="#890"/><rect x="1237" y="143" width="16" height="8" fill="#990"/><rect x="1253" y="143" width="32" height="8" fill="#980"/><rect x="1285" y="143" width="16" height="8" fill="#970"/><rect x="1021" y="151" width="128" height="8" fill="#090"/><rect x="1149" y="151" width="8" height="8" fill="#0b0"/><rect x="1157" y="151" width="16" height="8" fill="#0f0"/><rect x="1173" y="151" width="8" height="8" fill="#1e0"/><rect x="1181" y="151" width="8" height="8" fill="#2e0"/><rect x="1189" y="151" width="8" height="8" fill="#3d0"/><rect x="1197" y="151" width="8" height="8" fill="#4d0"/><rect x="1205" y="151" width="8" height="8" fill="#6c0"/><rect x="1213" y="151" width="8" height="8" fill="#7c0"/><rect x="1221" y="151" width="8" height="8" fill="#8b0"/><rect x="1229" y="151" width="8" height="8" fill="#ab0"/><rect x="1237" y="151" width="8" height="8" fill="#aa0"/><rect x="1245" y="151" width="8" height="8" fill="#990"/><rect x="1253" y="151" width="32" height="8" fill="#980"/><rect x="1285" y="151" width="24" height="8" fill="#970"/><rect x="1309" y="151" width="32" height="8" fill="#960"/><rect x="1341" y="151" width="32" height="8" fill="#950"/><rect x="1021" y="159" width="80" height="8" fill="#090"/><rect x="1101" y="159" width="48" height="8" fill="#091"/><rect x="1149" y="159" width="8" height="8" fill="#0a1"/><rect x="1157" y="159" width="16" height="8" fill="#0f0"/><rect x="1173" y="159" width="16" height="8" fill="#1f0"/><rect x="1189" y="159" width="8" height="8" fill="#3f0"/><rect x="1197" y="159" width="8" height="8" fill="#4f0"/><rect x="1205" y="159" width="8" height="8" fill="#6f0"/><rect x="1213" y="159" width="8" height="8" fill="#8f0"/><rect x="1221" y="159" width="8" height="8" fill="#af0"/><rect x="1229" y="159" width="8" height="8" fill="#df0"/><rect x="1237" y="159" width="8" height="8" fill="#ff0"/><rect x="1245" y="159" width="8" height="8" fill="#fd0"/><rect x="1253" y="159" width="8" height="8" fill="#fc0"/><rect x="1261" y="159" width="8" height="8" fill="#eb0"/><rect x="1269" y="159" width="8" height="8" fill="#ea0"/><rect x="1277" y="159" width="8" height="8" fill="#d90"/><rect x="1285" y="159" width="8" height="8" fill="#d80"/><rect x="1293" y="159" width="8" height="8" fill="#c80"/><rect x="1301" y="159" width="16" height="8" fill="#b70"/><rect x="1317" y="159" width="16" height="8" fill="#a60"/><rect x="1333" y="159" width="8" height="8" fill="#960"/><rect x="1341" y="159" width="32" height="8" fill="#950"/><rect x="1373" y="159" width="24" height="8" fill="#940"/><rect x="1397" y="159" width="32" height="8" fill="#930"/><rect x="1429" y="159" width="16" height="8" fill="#920"/><rect x="1021" y="167" width="32" height="8" fill="#090"/><rect x="1053" y="167" width="64" height="8" fill="#091"/><rect x="1117" y="167" width="40" height="8" fill="#092"/><rect x="1157" y="167" width="16" height="8" fill="#0f1"/><rect x="1173" y="167" width="8" height="8" fill="#1f1"/><rect x="1181" y="167" width="8" height="8" fill="#2f1"/><rect x="1189" y="167" width="8" height="8" fill="#3f1"/><rect x="1197" y="167" width="8" height="8" fill="#4f1"/><rect x="1205" y="167" width="8" height="8" fill="#6f0"/><rect x="1213" y="167" width="8" height="8" fill="#8f0"/><rect x="1221" y="167" width="8" height="8" fill="#bf0"/><rect x="1229" y="167" width="8" height="8" fill="#ef0"/><rect x="1237" y="167" width="8" height="8" fill="#fe0"/><rect x="1245" y="167" width="8" height="8" fill="#fd0"/><rect x="1253" y="167" width="8" height="8" fill="#fc0"/><rect x="1261" y="167" width="16" height="8" fill="#fb0"/><rect x="1277" y="167" width="8" height="8" fill="#fa0"/><rect x="1285" y="167" width="8" height="8" fill="#f90"/><rect x="1293" y="167" width="8" height="8" fill="#f80"/><rect x="1301" y="167" width="16" height="8" fill="#f70"/><rect x="1317" y="167" width="8" height="8" fill="#f60"/><rect x="1325" y="167" width="16" height="8" fill="#f50"/><rect x="1341" y="167" width="8" height="8" fill="#f40"/><rect x="1349" y="167" width="16" height="8" fill="#e40"/><rect x="1365" y="167" width="8" height="8" fill="#d30"/><rect x="1373" y="167" width="16" height="8" fill="#c30"/><rect x="1389" y="167" width="16" height="8" fill="#b30"/><rect x="1405" y="167" width="16" height="8" fill="#a30"/><rect x="1421" y="167" width="8" height="8" fill="#930"/><rect x="1429" y="167" width="32" height="8" fill="#920"/><rect x="1461" y="167" width="24" height="8" fill="#910"/><rect x="1485" y="167" width="24" height="8" fill="#900"/><rect x="1021" y="175" width="40" height="8" fill="#091"/><rect x="1061" y="175" width="64" height="8" fill="#092"/><rect x="1125" y="175" width="32" height="8" fill="#093"/><rect x="1157" y="175" width="8" height="8" fill="#0e2"/><rect x="1165" y="175" width="8" height="8" fill="#0f1"/><rect x="1173" y="175" width="8" height="8" fill="#1f1"/><rect x="1181" y="175" width="8" height="8" fill="#2f1"/><rect x="1189" y="175" width="8" height="8" fill="#3f1"/><rect x="1197" y="175" width="8" height="8" fill="#4f1"/><rect x="1205" y="175" width="8" height="8" fill="#6f1"/><rect x="1213" y="175" width="8" height="8" fill="#8f1"/><rect x="1221" y="175" width="8" height="8" fill="#bf1"/><rect x="1229" y="175" width="8" height="8" fill="#ef1"/><rect x="1237" y="175" width="8" height="8" fill="#fe1"/><rect x="1245" y="175" width="8" height="8" fill="#fd1"/><rect x="1253" y="175" width="8" height="8" fill="#fc1"/><rect x="1261" y="175" width="8" height="8" fill="#fb1"/><rect x="1269" y="175" width="16" height="8" fill="#fa1"/><rect x="1285" y="175" width="8" height="8" fill="#f91"/><rect x="1293" y="175" width="8" height="8" fill="#f80"/><rect x="1301" y="175" width="16" height="8" fill="#f70"/><rect x="1317" y="175" width="8" height="8" fill="#f60"/><rect x="1325" y="175" width="16" height="8" fill="#f50"/><rect x="1341" y="175" width="16" height="8" fill="#f40"/><rect x="1357" y="175" width="16" height="8" fill="#f30"/><rect x="1373" y="175" width="24" height="8" fill="#f20"/><rect x="1397" y="175" width="32" height="8" fill="#f10"/><rect x="1429" y="175" width="16" height="8" fill="#e10"/><rect x="1445" y="175" width="16" height="8" fill="#d10"/><rect x="1461" y="175" width="16" height="8" fill="#c10"/><rect x="1477" y="175" width="16" height="8" fill="#b00"/><rect x="1493" y="175" width="8" height="8" fill="#a00"/><rect x="1501" y="175" width="80" height="8" fill="#900"/><rect x="1021" y="183" width="56" height="8" fill="#092"/><rect x="1077" y="183" width="64" height="8" fill="#093"/><rect x="1141" y="183" width="16" height="8" fill="#094"/><rect x="1157" y="183" width="8" height="8" fill="#0d3"/><rect x="1165" y="183" width="8" height="8" fill="#0f2"/><rect x="1173" y="183" width="8" height="8" fill="#1f2"/><rect x="1181" y="183" width="8" height="8" fill="#2f3"/><rect x="1189" y="183" width="8" height="8" fill="#3f3"/><rect x="1197" y="183" width="8" height="8" fill="#4f3"/><rect x="1205" y="183" width="8" height="8" fill="#6f2"/><rect x="1213" y="183" width="8" height="8" fill="#8f2"/><rect x="1221" y="183" width="8" height="8" fill="#bf2"/><rect x="1229" y="183" width="8" height="8" fill="#ef2"/><rect x="1237" y="183" width="8" height="8" fill="#fe2"/><rect x="1245" y="183" width="8" height="8" fill="#fd2"/><rect x="1253" y="183" width="8" height="8" fill="#fc2"/><rect x="1261" y="183" width="8" height="8" fill="#fb2"/><rect x="1269" y="183" width="16" height="8" fill="#fa1"/><rect x="1285" y="183" width="8" height="8" fill="#f91"/><rect x="1293" y="183" width="8" height="8" fill="#f81"/><rect x="1301" y="183" width="16" height="8" fill="#f71"/><rect x="1317" y="183" width="8" height="8" fill="#f61"/><rect x="1325" y="183" width="16" height="8" fill="#f51"/><rect x="1341" y="183" width="16" height="8" fill="#f41"/><rect x="1357" y="183" width="16" height="8" fill="#f31"/><rect x="1373" y="183" width="24" height="8" fill="#f20"/><rect x="1397" y="183" width="40" height="8" fill="#f10"/><rect x="1437" y="183" width="56" height="8" fill="#f00"/><rect x="1493" y="183" width="8" height="8" fill="#b00"/><rect x="1501" y="183" width="144" height="8" fill="#900"/><rect x="1021" y="191" width="8" height="8" fill="#092"/><rect x="1029" y="191" width="64" height="8" fill="#093"/><rect x="1093" y="191" width="56" height="8" fill="#094"/><rect x="1149" y="191" width="8" height="8" fill="#095"/><rect x="1157" y="191" width="8" height="8" fill="#0c4"/><rect x="1165" y="191" width="8" height="8" fill="#0f3"/><rect x="1173" y="191" width="16" height="8" fill="#1f4"/><rect x="1189" y="191" width="8" height="8" fill="#3f4"/><rect x="1197" y="191" width="8" height="8" fill="#4f4"/><rect x="1205" y="191" width="8" height="8" fill="#6f4"/><rect x="1213" y="191" width="8" height="8" fill="#9f4"/><rect x="1221" y="191" width="8" height="8" fill="#bf4"/><rect x="1229" y="191" width="8" height="8" fill="#ef4"/><rect x="1237" y="191" width="8" height="8" fill="#fe3"/><rect x="1245" y="191" width="8" height="8" fill="#fd3"/><rect x="1253" y="191" width="8" height="8" fill="#fc3"/><rect x="1261" y="191" width="8" height="8" fill="#fb3"/><rect x="1269" y="191" width="8" height="8" fill="#fa3"/><rect x="1277" y="191" width="8" height="8" fill="#f93"/><rect x="1285" y="191" width="8" height="8" fill="#f92"/><rect x="1293" y="191" width="8" height="8" fill="#f82"/><rect x="1301" y="191" width="8" height="8" fill="#f72"/><rect x="1309" y="191" width="16" height="8" fill="#f62"/><rect x="1325" y="191" width="16" height="8" fill="#f52"/><rect x="1341" y="191" width="16" height="8" fill="#f42"/><rect x="1357" y="191" width="16" height="8" fill="#f31"/><rect x="1373" y="191" width="24" height="8" fill="#f21"/><rect x="1397" y="191" width="40" height="8" fill="#f11"/><rect x="1437" y="191" width="48" height="8" fill="#f00"/><rect x="1485" y="191" width="8" height="8" fill="#b00"/><rect x="1493" y="191" width="168" height="8" fill="#900"/><rect x="1021" y="199" width="16" height="8" fill="#093"/><rect x="1037" y="199" width="64" height="8" fill="#094"/><rect x="1101" y="199" width="56" height="8" fill="#095"/><rect x="1157" y="199" width="8" height="8" fill="#0b5"/><rect x="1165" y="199" width="16" height="8" fill="#0f5"/><rect x="1181" y="199" width="8" height="8" fill="#1f5"/><rect x="1189" y="199" width="8" height="8" fill="#2f6"/><rect x="1197" y="199" width="8" height="8" fill="#4f6"/><rect x="1205" y="199" width="8" height="8" fill="#7f6"/><rect x="1213" y="199" width="8" height="8" fill="#9f6"/><rect x="1221" y="199" width="8" height="8" fill="#cf6"/><rect x="1229" y="199" width="8" height="8" fill="#ef6"/><rect x="1237" y="199" width="8" height="8" fill="#fe5"/><rect x="1245" y="199" width="8" height="8" fill="#fd5"/><rect x="1253" y="199" width="8" height="8" fill="#fc5"/><rect x="1261" y="199" width="8" height="8" fill="#fb5"/><rect x="1269" y="199" width="8" height="8" fill="#fa5"/><rect x="1277" y="199" width="16" height="8" fill="#f94"/><rect x="1293" y="199" width="8" height="8" fill="#f84"/><rect x="1301" y="199" width="8" height="8" fill="#f74"/><rect x="1309" y="199" width="8" height="8" fill="#f64"/><rect x="1317" y="199" width="8" height="8" fill="#f63"/><rect x="1325" y="199" width="16" height="8" fill="#f53"/><rect x="1341" y="199" width="16" height="8" fill="#f43"/><rect x="1357" y="199" width="8" height="8" fill="#f33"/><rect x="1365" y="199" width="8" height="8" fill="#f32"/><rect x="1373" y="199" width="24" height="8" fill="#f22"/><rect x="1397" y="199" width="8" height="8" fill="#f12"/><rect x="1405" y="199" width="24" height="8" fill="#f11"/><rect x="1429" y="199" width="16" height="8" fill="#f01"/><rect x="1445" y="199" width="32" height="8" fill="#f00"/><rect x="1477" y="199" width="8" height="8" fill="#b01"/><rect x="1485" y="199" width="16" height="8" fill="#901"/><rect x="1501" y="199" width="160" height="8" fill="#900"/><rect x="1021" y="207" width="32" height="8" fill="#094"/><rect x="1053" y="207" width="64" height="8" fill="#095"/><rect x="1117" y="207" width="40" height="8" fill="#096"/><rect x="1157" y="207" width="8" height="8" fill="#0a6"/><rect x="1165" y="207" width="16" height="8" fill="#0f7"/><rect x="1181" y="207" width="8" height="8" fill="#1f7"/><rect x="1189" y="207" width="8" height="8" fill="#2f8"/><rect x="1197" y="207" width="8" height="8" fill="#4f8"/><rect x="1205" y="207" width="8" height="8" fill="#6f8"/><rect x="1213" y="207" width="8" height="8" fill="#9f9"/><rect x="1221" y="207" width="8" height="8" fill="#cf8"/><rect x="1229" y="207" width="8" height="8" fill="#ff8"/><rect x="1237" y="207" width="8" height="8" fill="#fe8"/><rect x="1245" y="207" width="8" height="8" fill="#fd8"/><rect x="1253" y="207" width="8" height="8" fill="#fc7"/><rect x="1261" y="207" width="8" height="8" fill="#fb7"/><rect x="1269" y="207" width="8" height="8" fill="#fa7"/><rect x="1277" y="207" width="8" height="8" fill="#f97"/><rect x="1285" y="207" width="16" height="8" fill="#f86"/><rect x="1301" y="207" width="8" height="8" fill="#f76"/><rect x="1309" y="207" width="8" height="8" fill="#f66"/><rect x="1317" y="207" width="8" height="8" fill="#f65"/><rect x="1325" y="207" width="8" height="8" fill="#f55"/><rect x="1333" y="207" width="8" height="8" fill="#f45"/><rect x="1341" y="207" width="8" height="8" fill="#f44"/><rect x="1349" y="207" width="8" height="8" fill="#f34"/><rect x="1357" y="207" width="8" height="8" fill="#f33"/><rect x="1365" y="207" width="16" height="8" fill="#f23"/><rect x="1381" y="207" width="8" height="8" fill="#f22"/><rect x="1389" y="207" width="24" height="8" fill="#f12"/><rect x="1413" y="207" width="8" height="8" fill="#f11"/><rect x="1421" y="207" width="32" height="8" fill="#f01"/><rect x="1453" y="207" width="16" height="8" fill="#f00"/><rect x="1469" y="207" width="8" height="8" fill="#c01"/><rect x="1477" y="207" width="32" height="8" fill="#901"/><rect x="1509" y="207" width="152" height="8" fill="#900"/><rect x="1029" y="215" width="32" height="8" fill="#095"/><rect x="1061" y="215" width="64" height="8" fill="#096"/><rect x="1125" y="215" width="40" height="8" fill="#097"/><rect x="1165" y="215" width="16" height="8" fill="#0f9"/><rect x="1181" y="215" width="8" height="8" fill="#1fa"/><rect x="1189" y="215" width="8" height="8" fill="#2fa"/><rect x="1197" y="215" width="8" height="8" fill="#4fa"/><rect x="1205" y="215" width="8" height="8" fill="#6fb"/><rect x="1213" y="215" width="8" height="8" fill="#9fb"/><rect x="1221" y="215" width="8" height="8" fill="#cfc"/><rect x="1229" y="215" width="8" height="8" fill="#ffb"/><rect x="1237" y="215" width="8" height="8" fill="#feb"/><rect x="1245" y="215" width="8" height="8" fill="#fdb"/><rect x="1253" y="215" width="8" height="8" fill="#fca"/><rect x="1261" y="215" width="8" height="8" fill="#fba"/><rect x="1269" y="215" width="8" height="8" fill="#faa"/><rect x="1277" y="215" width="8" height="8" fill="#f99"/><rect x="1285" y="215" width="8" height="8" fill="#f88"/><rect x="1293" y="215" width="8" height="8" fill="#f78"/><rect x="1301" y="215" width="8" height="8" fill="#f77"/><rect x="1309" y="215" width="8" height="8" fill="#f67"/><rect x="1317" y="215" width="8" height="8" fill="#f56"/><rect x="1325" y="215" width="8" height="8" fill="#f46"/><rect x="1333" y="215" width="8" height="8" fill="#f45"/><rect x="1341" y="215" width="8" height="8" fill="#f35"/><rect x="1349" y="215" width="8" height="8" fill="#f34"/><rect x="1357" y="215" width="8" height="8" fill="#f24"/><rect x="1365" y="215" width="16" height="8" fill="#f23"/><rect x="1381" y="215" width="8" height="8" fill="#f13"/><rect x="1389" y="215" width="24" height="8" fill="#f12"/><rect x="1413" y="215" width="8" height="8" fill="#f02"/><rect x="1421" y="215" width="40" height="8" fill="#f01"/><rect x="1461" y="215" width="8" height="8" fill="#c01"/><rect x="1469" y="215" width="16" height="8" fill="#902"/><rect x="1485" y="215" width="32" height="8" fill="#901"/><rect x="1517" y="215" width="144" height="8" fill="#900"/><rect x="1029" y="223" width="48" height="8" fill="#096"/><rect x="1077" y="223" width="64" height="8" fill="#097"/><rect x="1141" y="223" width="24" height="8" fill="#098"/><rect x="1165" y="223" width="8" height="8" fill="#0eb"/><rect x="1173" y="223" width="8" height="8" fill="#0fc"/><rect x="1181" y="223" width="8" height="8" fill="#1fc"/><rect x="1189" y="223" width="8" height="8" fill="#2fd"/><rect x="1197" y="223" width="8" height="8" fill="#3fd"/><rect x="1205" y="223" width="8" height="8" fill="#5fe"/><rect x="1213" y="223" width="8" height="8" fill="#8fe"/><rect x="1221" y="223" width="8" height="8" fill="#cfe"/><rect x="1229" y="223" width="8" height="8" fill="#ffe"/><rect x="1237" y="223" width="8" height="8" fill="#fde"/><rect x="1245" y="223" width="8" height="8" fill="#fcd"/><rect x="1253" y="223" width="8" height="8" fill="#fbc"/><rect x="1261" y="223" width="8" height="8" fill="#fab"/><rect x="1269" y="223" width="8" height="8" fill="#f9b"/><rect x="1277" y="223" width="8" height="8" fill="#f8a"/><rect x="1285" y="223" width="16" height="8" fill="#f79"/><rect x="1301" y="223" width="8" height="8" fill="#f68"/><rect x="1309" y="223" width="8" height="8" fill="#f57"/><rect x="1317" y="223" width="8" height="8" fill="#f47"/><rect x="1325" y="223" width="8" height="8" fill="#f46"/><rect x="1333" y="223" width="8" height="8" fill="#f36"/><rect x="1341" y="223" width="8" height="8" fill="#f35"/><rect x="1349" y="223" width="8" height="8" fill="#f25"/><rect x="1357" y="223" width="16" height="8" fill="#f24"/><rect x="1373" y="223" width="24" height="8" fill="#f13"/><rect x="1397" y="223" width="8" height="8" fill="#f12"/><rect x="1405" y="223" width="24" height="8" fill="#f02"/><rect x="1429" y="223" width="24" height="8" fill="#f01"/><rect x="1453" y="223" width="8" height="8" fill="#c02"/><rect x="1461" y="223" width="32" height="8" fill="#902"/><rect x="1493" y="223" width="40" height="8" fill="#901"/><rect x="1533" y="223" width="128" height="8" fill="#900"/><rect x="1029" y="231" width="8" height="8" fill="#096"/><rect x="1037" y="231" width="48" height="8" fill="#097"/><rect x="1085" y="231" width="64" height="8" fill="#098"/><rect x="1149" y="231" width="16" height="8" fill="#099"/><rect x="1165" y="231" width="8" height="8" fill="#0dc"/><rect x="1173" y="231" width="8" height="8" fill="#0fe"/><rect x="1181" y="231" width="8" height="8" fill="#1ff"/><rect x="1189" y="231" width="8" height="8" fill="#2ff"/><rect x="1197" y="231" width="8" height="8" fill="#3ff"/><rect x="1205" y="231" width="8" height="8" fill="#5ef"/><rect x="1213" y="231" width="8" height="8" fill="#8ef"/><rect x="1221" y="231" width="8" height="8" fill="#bef"/><rect x="1229" y="231" width="8" height="8" fill="#edf"/><rect x="1237" y="231" width="8" height="8" fill="#fcf"/><rect x="1245" y="231" width="8" height="8" fill="#fbe"/><rect x="1253" y="231" width="8" height="8" fill="#fad"/><rect x="1261" y="231" width="8" height="8" fill="#f9c"/><rect x="1269" y="231" width="8" height="8" fill="#f8b"/><rect x="1277" y="231" width="8" height="8" fill="#f7b"/><rect x="1285" y="231" width="8" height="8" fill="#f7a"/><rect x="1293" y="231" width="8" height="8" fill="#f69"/><rect x="1301" y="231" width="8" height="8" fill="#f59"/><rect x="1309" y="231" width="8" height="8" fill="#f48"/><rect x="1317" y="231" width="8" height="8" fill="#f47"/><rect x="1325" y="231" width="8" height="8" fill="#f37"/><rect x="1333" y="231" width="8" height="8" fill="#f36"/><rect x="1341" y="231" width="8" height="8" fill="#f26"/><rect x="1349" y="231" width="16" height="8" fill="#f25"/><rect x="1365" y="231" width="16" height="8" fill="#f14"/><rect x="1381" y="231" width="16" height="8" fill="#f13"/><rect x="1397" y="231" width="8" height="8" fill="#f03"/><rect x="1405" y="231" width="32" height="8" fill="#f02"/><rect x="1437" y="231" width="8" height="8" fill="#f01"/><rect x="1445" y="231" width="8" height="8" fill="#c02"/><rect x="1453" y="231" width="16" height="8" fill="#903"/><rect x="1469" y="231" width="32" height="8" fill="#902"/><rect x="1501" y="231" width="40" height="8" fill="#901"/><rect x="1541" y="231" width="112" height="8" fill="#900"/><rect x="1037" y="239" width="64" height="8" fill="#098"/><rect x="1101" y="239" width="64" height="8" fill="#099"/><rect x="1165" y="239" width="8" height="8" fill="#0bc"/><rect x="1173" y="239" width="8" height="8" fill="#0ef"/><rect x="1181" y="239" width="16" height="8" fill="#1ef"/><rect x="1197" y="239" width="8" height="8" fill="#3df"/><rect x="1205" y="239" width="8" height="8" fill="#5df"/><rect x="1213" y="239" width="8" height="8" fill="#7df"/><rect x="1221" y="239" width="8" height="8" fill="#adf"/><rect x="1229" y="239" width="8" height="8" fill="#dcf"/><rect x="1237" y="239" width="8" height="8" fill="#ebf"/><rect x="1245" y="239" width="8" height="8" fill="#faf"/><rect x="1253" y="239" width="8" height="8" fill="#f9e"/><rect x="1261" y="239" width="8" height="8" fill="#f8d"/><rect x="1269" y="239" width="8" height="8" fill="#f7c"/><rect x="1277" y="239" width="8" height="8" fill="#f7b"/><rect x="1285" y="239" width="8" height="8" fill="#f6b"/><rect x="1293" y="239" width="8" height="8" fill="#f5a"/><rect x="1301" y="239" width="16" height="8" fill="#f49"/><rect x="1317" y="239" width="8" height="8" fill="#f38"/><rect x="1325" y="239" width="8" height="8" fill="#f37"/><rect x="1333" y="239" width="8" height="8" fill="#f27"/><rect x="1341" y="239" width="16" height="8" fill="#f26"/><rect x="1357" y="239" width="16" height="8" fill="#f15"/><rect x="1373" y="239" width="16" height="8" fill="#f14"/><rect x="1389" y="239" width="24" height="8" fill="#f03"/><rect x="1413" y="239" width="24" height="8" fill="#f02"/><rect x="1437" y="239" width="8" height="8" fill="#c03"/><rect x="1445" y="239" width="32" height="8" fill="#903"/><rect x="1477" y="239" width="32" height="8" fill="#902"/><rect x="1509" y="239" width="40" height="8" fill="#901"/><rect x="1549" y="239" width="96" height="8" fill="#900"/><rect x="1037" y="247" width="16" height="8" fill="#098"/><rect x="1053" y="247" width="112" height="8" fill="#099"/><rect x="1165" y="247" width="8" height="8" fill="#0ab"/><rect x="1173" y="247" width="16" height="8" fill="#0df"/><rect x="1189" y="247" width="8" height="8" fill="#1df"/><rect x="1197" y="247" width="8" height="8" fill="#2cf"/><rect x="1205" y="247" width="8" height="8" fill="#4cf"/><rect x="1213" y="247" width="8" height="8" fill="#7cf"/><rect x="1221" y="247" width="8" height="8" fill="#acf"/><rect x="1229" y="247" width="8" height="8" fill="#cbf"/><rect x="1237" y="247" width="8" height="8" fill="#daf"/><rect x="1245" y="247" width="8" height="8" fill="#e9f"/><rect x="1253" y="247" width="8" height="8" fill="#f8f"/><rect x="1261" y="247" width="8" height="8" fill="#f7e"/><rect x="1269" y="247" width="8" height="8" fill="#f7d"/><rect x="1277" y="247" width="8" height="8" fill="#f6c"/><rect x="1285" y="247" width="8" height="8" fill="#f5b"/><rect x="1293" y="247" width="8" height="8" fill="#f4b"/><rect x="1301" y="247" width="8" height="8" fill="#f4a"/><rect x="1309" y="247" width="16" height="8" fill="#f39"/><rect x="1325" y="247" width="8" height="8" fill="#f28"/><rect x="1333" y="247" width="16" height="8" fill="#f27"/><rect x="1349" y="247" width="16" height="8" fill="#f16"/><rect x="1365" y="247" width="16" height="8" fill="#f15"/><rect x="1381" y="247" width="16" height="8" fill="#f04"/><rect x="1397" y="247" width="24" height="8" fill="#f03"/><rect x="1421" y="247" width="8" height="8" fill="#f02"/><rect x="1429" y="247" width="8" height="8" fill="#c03"/><rect x="1437" y="247" width="8" height="8" fill="#904"/><rect x="1445" y="247" width="40" height="8" fill="#903"/><rect x="1485" y="247" width="32" height="8" fill="#902"/><rect x="1517" y="247" width="40" height="8" fill="#901"/><rect x="1557" y="247" width="80" height="8" fill="#900"/><rect x="1037" y="255" width="80" height="8" fill="#099"/><rect x="1117" y="255" width="48" height="8" fill="#089"/><rect x="1165" y="255" width="8" height="8" fill="#09a"/><rect x="1173" y="255" width="16" height="8" fill="#0cf"/><rect x="1189" y="255" width="8" height="8" fill="#1cf"/><rect x="1197" y="255" width="8" height="8" fill="#2bf"/><rect x="1205" y="255" width="8" height="8" fill="#4bf"/><rect x="1213" y="255" width="8" height="8" fill="#6bf"/><rect x="1221" y="255" width="8" height="8" fill="#9bf"/><rect x="1229" y="255" width="8" height="8" fill="#baf"/><rect x="1237" y="255" width="8" height="8" fill="#c9f"/><rect x="1245" y="255" width="8" height="8" fill="#d8f"/><rect x="1253" y="255" width="8" height="8" fill="#e7f"/><rect x="1261" y="255" width="8" height="8" fill="#f7f"/><rect x="1269" y="255" width="8" height="8" fill="#f6e"/><rect x="1277" y="255" width="8" height="8" fill="#f5d"/><rect x="1285" y="255" width="8" height="8" fill="#f4c"/><rect x="1293" y="255" width="8" height="8" fill="#f4b"/><rect x="1301" y="255" width="8" height="8" fill="#f3b"/><rect x="1309" y="255" width="8" height="8" fill="#f3a"/><rect x="1317" y="255" width="16" height="8" fill="#f29"/><rect x="1333" y="255" width="8" height="8" fill="#f28"/><rect x="1341" y="255" width="16" height="8" fill="#f17"/><rect x="1357" y="255" width="16" height="8" fill="#f16"/><rect x="1373" y="255" width="16" height="8" fill="#f05"/><rect x="1389" y="255" width="16" height="8" fill="#f04"/><rect x="1405" y="255" width="16" height="8" fill="#f03"/><rect x="1421" y="255" width="8" height="8" fill="#c03"/><rect x="1429" y="255" width="24" height="8" fill="#904"/><rect x="1453" y="255" width="40" height="8" fill="#903"/><rect x="1493" y="255" width="32" height="8" fill="#902"/><rect x="1525" y="255" width="40" height="8" fill="#901"/><rect x="1565" y="255" width="64" height="8" fill="#900"/><rect x="1045" y="263" width="24" height="8" fill="#099"/><rect x="1069" y="263" width="104" height="8" fill="#089"/><rect x="1173" y="263" width="16" height="8" fill="#0bf"/><rect x="1189" y="263" width="8" height="8" fill="#1bf"/><rect x="1197" y="263" width="8" height="8" fill="#2af"/><rect x="1205" y="263" width="8" height="8" fill="#4af"/><rect x="1213" y="263" width="8" height="8" fill="#6af"/><rect x="1221" y="263" width="8" height="8" fill="#9af"/><rect x="1229" y="263" width="8" height="8" fill="#a9f"/><rect x="1237" y="263" width="8" height="8" fill="#b8f"/><rect x="1245" y="263" width="8" height="8" fill="#c7f"/><rect x="1253" y="263" width="8" height="8" fill="#d7f"/><rect x="1261" y="263" width="8" height="8" fill="#e6f"/><rect x="1269" y="263" width="8" height="8" fill="#f5f"/><rect x="1277" y="263" width="8" height="8" fill="#f4e"/><rect x="1285" y="263" width="8" height="8" fill="#f4d"/><rect x="1293" y="263" width="16" height="8" fill="#f3c"/><rect x="1309" y="263" width="8" height="8" fill="#f2b"/><rect x="1317" y="263" width="8" height="8" fill="#f2a"/><rect x="1325" y="263" width="8" height="8" fill="#f29"/><rect x="1333" y="263" width="8" height="8" fill="#f19"/><rect x="1341" y="263" width="8" height="8" fill="#f18"/><rect x="1349" y="263" width="16" height="8" fill="#f17"/><rect x="1365" y="263" width="16" height="8" fill="#f06"/><rect x="1381" y="263" width="16" height="8" fill="#f05"/><rect x="1397" y="263" width="16" height="8" fill="#f04"/><rect x="1413" y="263" width="8" height="8" fill="#c04"/><rect x="1421" y="263" width="8" height="8" fill="#905"/><rect x="1429" y="263" width="32" height="8" fill="#904"/><rect x="1461" y="263" width="40" height="8" fill="#903"/><rect x="1501" y="263" width="32" height="8" fill="#902"/><rect x="1533" y="263" width="40" height="8" fill="#901"/><rect x="1573" y="263" width="48" height="8" fill="#900"/><rect x="1045" y="271" width="128" height="8" fill="#089"/><rect x="1173" y="271" width="8" height="8" fill="#0ae"/><rect x="1181" y="271" width="8" height="8" fill="#0af"/><rect x="1189" y="271" width="8" height="8" fill="#1af"/><rect x="1197" y="271" width="8" height="8" fill="#2af"/><rect x="1205" y="271" width="8" height="8" fill="#39f"/><rect x="1213" y="271" width="8" height="8" fill="#69f"/><rect x="1221" y="271" width="8" height="8" fill="#89f"/><rect x="1229" y="271" width="8" height="8" fill="#a8f"/><rect x="1237" y="271" width="8" height="8" fill="#a7f"/><rect x="1245" y="271" width="8" height="8" fill="#b7f"/><rect x="1253" y="271" width="8" height="8" fill="#c6f"/><rect x="1261" y="271" width="8" height="8" fill="#d5f"/><rect x="1269" y="271" width="8" height="8" fill="#e5f"/><rect x="1277" y="271" width="8" height="8" fill="#f4f"/><rect x="1285" y="271" width="8" height="8" fill="#f3e"/><rect x="1293" y="271" width="8" height="8" fill="#f3d"/><rect x="1301" y="271" width="16" height="8" fill="#f2c"/><rect x="1317" y="271" width="8" height="8" fill="#f2b"/><rect x="1325" y="271" width="8" height="8" fill="#f1a"/><rect x="1333" y="271" width="16" height="8" fill="#f19"/><rect x="1349" y="271" width="8" height="8" fill="#f18"/><rect x="1357" y="271" width="16" height="8" fill="#f07"/><rect x="1373" y="271" width="16" height="8" fill="#f06"/><rect x="1389" y="271" width="16" height="8" fill="#f05"/><rect x="1405" y="271" width="8" height="8" fill="#c05"/><rect x="1413" y="271" width="24" height="8" fill="#905"/><rect x="1437" y="271" width="32" height="8" fill="#904"/><rect x="1469" y="271" width="40" height="8" fill="#903"/><rect x="1509" y="271" width="32" height="8" fill="#902"/><rect x="1541" y="271" width="40" height="8" fill="#901"/><rect x="1581" y="271" width="32" height="8" fill="#900"/><rect x="1053" y="279" width="88" height="8" fill="#089"/><rect x="1141" y="279" width="32" height="8" fill="#079"/><rect x="1173" y="279" width="8" height="8" fill="#09d"/><rect x="1181" y="279" width="8" height="8" fill="#09f"/><rect x="1189" y="279" width="8" height="8" fill="#19f"/><rect x="1197" y="279" width="8" height="8" fill="#29f"/><rect x="1205" y="279" width="8" height="8" fill="#39f"/><rect x="1213" y="279" width="8" height="8" fill="#58f"/><rect x="1221" y="279" width="8" height="8" fill="#88f"/><rect x="1229" y="279" width="8" height="8" fill="#97f"/><rect x="1237" y="279" width="8" height="8" fill="#a7f"/><rect x="1245" y="279" width="8" height="8" fill="#a6f"/><rect x="1253" y="279" width="8" height="8" fill="#b5f"/><rect x="1261" y="279" width="8" height="8" fill="#c5f"/><rect x="1269" y="279" width="8" height="8" fill="#d4f"/><rect x="1277" y="279" width="8" height="8" fill="#e3f"/><rect x="1285" y="279" width="8" height="8" fill="#f3f"/><rect x="1293" y="279" width="8" height="8" fill="#f2e"/><rect x="1301" y="279" width="8" height="8" fill="#f2d"/><rect x="1309" y="279" width="8" height="8" fill="#f2c"/><rect x="1317" y="279" width="8" height="8" fill="#f1c"/><rect x="1325" y="279" width="8" height="8" fill="#f1b"/><rect x="1333" y="279" width="8" height="8" fill="#f1a"/><rect x="1341" y="279" width="8" height="8" fill="#f19"/><rect x="1349" y="279" width="8" height="8" fill="#f09"/><rect x="1357" y="279" width="8" height="8" fill="#f08"/><rect x="1365" y="279" width="16" height="8" fill="#f07"/><rect x="1381" y="279" width="16" height="8" fill="#f06"/><rect x="1397" y="279" width="8" height="8" fill="#d05"/><rect x="1405" y="279" width="8" height="8" fill="#906"/><rect x="1413" y="279" width="32" height="8" fill="#905"/><rect x="1445" y="279" width="32" height="8" fill="#904"/><rect x="1477" y="279" width="40" height="8" fill="#903"/><rect x="1517" y="279" width="32" height="8" fill="#902"/><rect x="1549" y="279" width="40" height="8" fill="#901"/><rect x="1589" y="279" width="16" height="8" fill="#900"/><rect x="1053" y="287" width="40" height="8" fill="#089"/><rect x="1093" y="287" width="80" height="8" fill="#079"/><rect x="1173" y="287" width="8" height="8" fill="#08c"/><rect x="1181" y="287" width="8" height="8" fill="#08f"/><rect x="1189" y="287" width="16" height="8" fill="#18f"/><rect x="1205" y="287" width="8" height="8" fill="#38f"/><rect x="1213" y="287" width="8" height="8" fill="#58f"/><rect x="1221" y="287" width="8" height="8" fill="#77f"/><rect x="1229" y="287" width="8" height="8" fill="#87f"/><rect x="1237" y="287" width="8" height="8" fill="#96f"/><rect x="1245" y="287" width="16" height="8" fill="#a5f"/><rect x="1261" y="287" width="8" height="8" fill="#b4f"/><rect x="1269" y="287" width="8" height="8" fill="#c3f"/><rect x="1277" y="287" width="8" height="8" fill="#d3f"/><rect x="1285" y="287" width="8" height="8" fill="#e2f"/><rect x="1293" y="287" width="8" height="8" fill="#f2f"/><rect x="1301" y="287" width="8" height="8" fill="#f2e"/><rect x="1309" y="287" width="8" height="8" fill="#f1d"/><rect x="1317" y="287" width="16" height="8" fill="#f1c"/><rect x="1333" y="287" width="8" height="8" fill="#f1b"/><rect x="1341" y="287" width="8" height="8" fill="#f0a"/><rect x="1349" y="287" width="16" height="8" fill="#f09"/><rect x="1365" y="287" width="8" height="8" fill="#f08"/><rect x="1373" y="287" width="16" height="8" fill="#f07"/><rect x="1389" y="287" width="8" height="8" fill="#d06"/><rect x="1397" y="287" width="24" height="8" fill="#906"/><rect x="1421" y="287" width="32" height="8" fill="#905"/><rect x="1453" y="287" width="32" height="8" fill="#904"/><rect x="1485" y="287" width="40" height="8" fill="#903"/><rect x="1525" y="287" width="32" height="8" fill="#902"/><rect x="1557" y="287" width="40" height="8" fill="#901"/><rect x="1053" y="295" width="8" height="8" fill="#089"/><rect x="1061" y="295" width="112" height="8" fill="#079"/><rect x="1173" y="295" width="8" height="8" fill="#07b"/><rect x="1181" y="295" width="16" height="8" fill="#07f"/><rect x="1197" y="295" width="8" height="8" fill="#17f"/><rect x="1205" y="295" width="8" height="8" fill="#37f"/><rect x="1213" y="295" width="8" height="8" fill="#47f"/><rect x="1221" y="295" width="8" height="8" fill="#77f"/><rect x="1229" y="295" width="8" height="8" fill="#76f"/><rect x="1237" y="295" width="8" height="8" fill="#85f"/><rect x="1245" y="295" width="8" height="8" fill="#95f"/><rect x="1253" y="295" width="8" height="8" fill="#a4f"/><rect x="1261" y="295" width="8" height="8" fill="#a3f"/><rect x="1269" y="295" width="8" height="8" fill="#b3f"/><rect x="1277" y="295" width="8" height="8" fill="#c2f"/><rect x="1285" y="295" width="8" height="8" fill="#d2f"/><rect x="1293" y="295" width="8" height="8" fill="#e2f"/><rect x="1301" y="295" width="8" height="8" fill="#f1f"/><rect x="1309" y="295" width="8" height="8" fill="#f1e"/><rect x="1317" y="295" width="8" height="8" fill="#f1d"/><rect x="1325" y="295" width="8" height="8" fill="#f1c"/><rect x="1333" y="295" width="8" height="8" fill="#f0c"/><rect x="1341" y="295" width="8" height="8" fill="#f0b"/><rect x="1349" y="295" width="8" height="8" fill="#f0a"/><rect x="1357" y="295" width="16" height="8" fill="#f09"/><rect x="1373" y="295" width="8" height="8" fill="#f08"/><rect x="1381" y="295" width="8" height="8" fill="#d07"/><rect x="1389" y="295" width="40" height="8" fill="#906"/><rect x="1429" y="295" width="32" height="8" fill="#905"/><rect x="1461" y="295" width="40" height="8" fill="#904"/><rect x="1501" y="295" width="32" height="8" fill="#903"/><rect x="1533" y="295" width="32" height="8" fill="#902"/><rect x="1565" y="295" width="24" height="8" fill="#901"/><rect x="1061" y="303" width="104" height="8" fill="#079"/><rect x="1165" y="303" width="8" height="8" fill="#069"/><rect x="1173" y="303" width="8" height="8" fill="#06a"/><rect x="1181" y="303" width="8" height="8" fill="#07f"/><rect x="1189" y="303" width="8" height="8" fill="#06f"/><rect x="1197" y="303" width="8" height="8" fill="#16f"/><rect x="1205" y="303" width="8" height="8" fill="#26f"/><rect x="1213" y="303" width="8" height="8" fill="#46f"/><rect x="1221" y="303" width="8" height="8" fill="#66f"/><rect x="1229" y="303" width="16" height="8" fill="#75f"/><rect x="1245" y="303" width="8" height="8" fill="#84f"/><rect x="1253" y="303" width="8" height="8" fill="#93f"/><rect x="1261" y="303" width="8" height="8" fill="#a3f"/><rect x="1269" y="303" width="8" height="8" fill="#a2f"/><rect x="1277" y="303" width="8" height="8" fill="#b2f"/><rect x="1285" y="303" width="8" height="8" fill="#c2f"/><rect x="1293" y="303" width="8" height="8" fill="#d1f"/><rect x="1301" y="303" width="8" height="8" fill="#e1f"/><rect x="1309" y="303" width="8" height="8" fill="#f1f"/><rect x="1317" y="303" width="8" height="8" fill="#f1e"/><rect x="1325" y="303" width="8" height="8" fill="#f0d"/><rect x="1333" y="303" width="16" height="8" fill="#f0c"/><rect x="1349" y="303" width="8" height="8" fill="#f0b"/><rect x="1357" y="303" width="8" height="8" fill="#f0a"/><rect x="1365" y="303" width="8" height="8" fill="#f09"/><rect x="1373" y="303" width="8" height="8" fill="#d08"/><rect x="1381" y="303" width="16" height="8" fill="#907"/><rect x="1397" y="303" width="40" height="8" fill="#906"/><rect x="1437" y="303" width="32" height="8" fill="#905"/><rect x="1469" y="303" width="40" height="8" fill="#904"/><rect x="1509" y="303" width="32" height="8" fill="#903"/><rect x="1541" y="303" width="32" height="8" fill="#902"/><rect x="1573" y="303" width="8" height="8" fill="#901"/><rect x="1061" y="311" width="56" height="8" fill="#079"/><rect x="1117" y="311" width="64" height="8" fill="#069"/><rect x="1181" y="311" width="16" height="8" fill="#06f"/><rect x="1197" y="311" width="8" height="8" fill="#16f"/><rect x="1205" y="311" width="8" height="8" fill="#26f"/><rect x="1213" y="311" width="8" height="8" fill="#45f"/><rect x="1221" y="311" width="8" height="8" fill="#55f"/><rect x="1229" y="311" width="8" height="8" fill="#65f"/><rect x="1237" y="311" width="8" height="8" fill="#74f"/><rect x="1245" y="311" width="8" height="8" fill="#73f"/><rect x="1253" y="311" width="8" height="8" fill="#83f"/><rect x="1261" y="311" width="8" height="8" fill="#92f"/><rect x="1269" y="311" width="16" height="8" fill="#a2f"/><rect x="1285" y="311" width="8" height="8" fill="#b1f"/><rect x="1293" y="311" width="8" height="8" fill="#c1f"/><rect x="1301" y="311" width="8" height="8" fill="#d1f"/><rect x="1309" y="311" width="8" height="8" fill="#e1f"/><rect x="1317" y="311" width="8" height="8" fill="#f0f"/><rect x="1325" y="311" width="8" height="8" fill="#f0e"/><rect x="1333" y="311" width="8" height="8" fill="#f0d"/><rect x="1341" y="311" width="16" height="8" fill="#f0c"/><rect x="1357" y="311" width="8" height="8" fill="#f0b"/><rect x="1365" y="311" width="8" height="8" fill="#d09"/><rect x="1373" y="311" width="32" height="8" fill="#907"/><rect x="1405" y="311" width="40" height="8" fill="#906"/><rect x="1445" y="311" width="32" height="8" fill="#905"/><rect x="1477" y="311" width="40" height="8" fill="#904"/><rect x="1517" y="311" width="32" height="8" fill="#903"/><rect x="1549" y="311" width="24" height="8" fill="#902"/><rect x="1069" y="319" width="112" height="8" fill="#069"/><rect x="1181" y="319" width="8" height="8" fill="#05e"/><rect x="1189" y="319" width="8" height="8" fill="#05f"/><rect x="1197" y="319" width="8" height="8" fill="#15f"/><rect x="1205" y="319" width="8" height="8" fill="#25f"/><rect x="1213" y="319" width="8" height="8" fill="#35f"/><rect x="1221" y="319" width="8" height="8" fill="#55f"/><rect x="1229" y="319" width="8" height="8" fill="#64f"/><rect x="1237" y="319" width="8" height="8" fill="#63f"/><rect x="1245" y="319" width="8" height="8" fill="#73f"/><rect x="1253" y="319" width="8" height="8" fill="#72f"/><rect x="1261" y="319" width="8" height="8" fill="#82f"/><rect x="1269" y="319" width="8" height="8" fill="#92f"/><rect x="1277" y="319" width="16" height="8" fill="#a1f"/><rect x="1293" y="319" width="8" height="8" fill="#b1f"/><rect x="1301" y="319" width="8" height="8" fill="#c1f"/><rect x="1309" y="319" width="8" height="8" fill="#d0f"/><rect x="1317" y="319" width="8" height="8" fill="#e0f"/><rect x="1325" y="319" width="8" height="8" fill="#f0f"/><rect x="1333" y="319" width="8" height="8" fill="#f0e"/><rect x="1341" y="319" width="8" height="8" fill="#f0d"/><rect x="1349" y="319" width="8" height="8" fill="#f0c"/><rect x="1357" y="319" width="8" height="8" fill="#d0a"/><rect x="1365" y="319" width="16" height="8" fill="#908"/><rect x="1381" y="319" width="32" height="8" fill="#907"/><rect x="1413" y="319" width="40" height="8" fill="#906"/><rect x="1453" y="319" width="32" height="8" fill="#905"/><rect x="1485" y="319" width="40" height="8" fill="#904"/><rect x="1525" y="319" width="32" height="8" fill="#903"/><rect x="1557" y="319" width="8" height="8" fill="#902"/><rect x="1069" y="327" width="112" height="8" fill="#069"/><rect x="1181" y="327" width="8" height="8" fill="#05d"/><rect x="1189" y="327" width="8" height="8" fill="#05f"/><rect x="1197" y="327" width="8" height="8" fill="#14f"/><rect x="1205" y="327" width="8" height="8" fill="#24f"/><rect x="1213" y="327" width="8" height="8" fill="#34f"/><rect x="1221" y="327" width="8" height="8" fill="#44f"/><rect x="1229" y="327" width="8" height="8" fill="#53f"/><rect x="1237" y="327" width="8" height="8" fill="#63f"/><rect x="1245" y="327" width="8" height="8" fill="#62f"/><rect x="1253" y="327" width="16" height="8" fill="#72f"/><rect x="1269" y="327" width="8" height="8" fill="#81f"/><rect x="1277" y="327" width="8" height="8" fill="#91f"/><rect x="1285" y="327" width="16" height="8" fill="#a1f"/><rect x="1301" y="327" width="8" height="8" fill="#b0f"/><rect x="1309" y="327" width="8" height="8" fill="#c0f"/><rect x="1317" y="327" width="8" height="8" fill="#d0f"/><rect x="1325" y="327" width="8" height="8" fill="#e0f"/><rect x="1333" y="327" width="8" height="8" fill="#f0f"/><rect x="1341" y="327" width="8" height="8" fill="#f0e"/><rect x="1349" y="327" width="8" height="8" fill="#d0c"/><rect x="1357" y="327" width="32" height="8" fill="#908"/><rect x="1389" y="327" width="32" height="8" fill="#907"/><rect x="1421" y="327" width="40" height="8" fill="#906"/><rect x="1461" y="327" width="32" height="8" fill="#905"/><rect x="1493" y="327" width="40" height="8" fill="#904"/><rect x="1533" y="327" width="24" height="8" fill="#903"/><rect x="1077" y="335" width="64" height="8" fill="#069"/><rect x="1141" y="335" width="40" height="8" fill="#059"/><rect x="1181" y="335" width="8" height="8" fill="#05c"/><rect x="1189" y="335" width="8" height="8" fill="#04f"/><rect x="1197" y="335" width="16" height="8" fill="#14f"/><rect x="1213" y="335" width="8" height="8" fill="#34f"/><rect x="1221" y="335" width="16" height="8" fill="#43f"/><rect x="1237" y="335" width="8" height="8" fill="#52f"/><rect x="1245" y="335" width="16" height="8" fill="#62f"/><rect x="1261" y="335" width="16" height="8" fill="#71f"/><rect x="1277" y="335" width="8" height="8" fill="#81f"/><rect x="1285" y="335" width="8" height="8" fill="#91f"/><rect x="1293" y="335" width="16" height="8" fill="#a0f"/><rect x="1309" y="335" width="8" height="8" fill="#b0f"/><rect x="1317" y="335" width="8" height="8" fill="#c0f"/><rect x="1325" y="335" width="8" height="8" fill="#d0f"/><rect x="1333" y="335" width="8" height="8" fill="#e0f"/><rect x="1341" y="335" width="8" height="8" fill="#d0d"/><rect x="1349" y="335" width="16" height="8" fill="#909"/><rect x="1365" y="335" width="32" height="8" fill="#908"/><rect x="1397" y="335" width="32" height="8" fill="#907"/><rect x="1429" y="335" width="40" height="8" fill="#906"/><rect x="1469" y="335" width="32" height="8" fill="#905"/><rect x="1501" y="335" width="40" height="8" fill="#904"/><rect x="1541" y="335" width="8" height="8" fill="#903"/><rect x="1077" y="343" width="16" height="8" fill="#069"/><rect x="1093" y="343" width="88" height="8" fill="#059"/><rect x="1181" y="343" width="8" height="8" fill="#04b"/><rect x="1189" y="343" width="16" height="8" fill="#03f"/><rect x="1205" y="343" width="8" height="8" fill="#13f"/><rect x="1213" y="343" width="16" height="8" fill="#33f"/><rect x="1229" y="343" width="16" height="8" fill="#42f"/><rect x="1245" y="343" width="8" height="8" fill="#52f"/><rect x="1253" y="343" width="8" height="8" fill="#51f"/><rect x="1261" y="343" width="8" height="8" fill="#61f"/><rect x="1269" y="343" width="16" height="8" fill="#71f"/><rect x="1285" y="343" width="8" height="8" fill="#80f"/><rect x="1293" y="343" width="8" height="8" fill="#90f"/><rect x="1301" y="343" width="16" height="8" fill="#a0f"/><rect x="1317" y="343" width="8" height="8" fill="#b0f"/><rect x="1325" y="343" width="8" height="8" fill="#c0f"/><rect x="1333" y="343" width="8" height="8" fill="#c0d"/><rect x="1341" y="343" width="32" height="8" fill="#909"/><rect x="1373" y="343" width="32" height="8" fill="#908"/><rect x="1405" y="343" width="32" height="8" fill="#907"/><rect x="1437" y="343" width="40" height="8" fill="#906"/><rect x="1477" y="343" width="32" height="8" fill="#905"/><rect x="1509" y="343" width="32" height="8" fill="#904"/><rect x="1085" y="351" width="96" height="8" fill="#059"/><rect x="1181" y="351" width="8" height="8" fill="#04a"/><rect x="1189" y="351" width="16" height="8" fill="#03f"/><rect x="1205" y="351" width="8" height="8" fill="#13f"/><rect x="1213" y="351" width="8" height="8" fill="#23f"/><rect x="1221" y="351" width="16" height="8" fill="#32f"/><rect x="1237" y="351" width="8" height="8" fill="#42f"/><rect x="1245" y="351" width="8" height="8" fill="#41f"/><rect x="1253" y="351" width="16" height="8" fill="#51f"/><rect x="1269" y="351" width="8" height="8" fill="#61f"/><rect x="1277" y="351" width="16" height="8" fill="#70f"/><rect x="1293" y="351" width="8" height="8" fill="#80f"/><rect x="1301" y="351" width="8" height="8" fill="#90f"/><rect x="1309" y="351" width="16" height="8" fill="#a0f"/><rect x="1325" y="351" width="8" height="8" fill="#a0d"/><rect x="1333" y="351" width="16" height="8" fill="#809"/><rect x="1349" y="351" width="32" height="8" fill="#909"/><rect x="1381" y="351" width="32" height="8" fill="#908"/><rect x="1413" y="351" width="32" height="8" fill="#907"/><rect x="1445" y="351" width="40" height="8" fill="#906"/><rect x="1485" y="351" width="32" height="8" fill="#905"/><rect x="1517" y="351" width="16" height="8" fill="#904"/><rect x="1085" y="359" width="80" height="8" fill="#059"/><rect x="1165" y="359" width="24" height="8" fill="#049"/><rect x="1189" y="359" width="16" height="8" fill="#03f"/><rect x="1205" y="359" width="8" height="8" fill="#12f"/><rect x="1213" y="359" width="8" height="8" fill="#22f"/><rect x="1221" y="359" width="16" height="8" fill="#32f"/><rect x="1237" y="359" width="8" height="8" fill="#31f"/><rect x="1245" y="359" width="16" height="8" fill="#41f"/><rect x="1261" y="359" width="8" height="8" fill="#51f"/><rect x="1269" y="359" width="8" height="8" fill="#50f"/><rect x="1277" y="359" width="8" height="8" fill="#60f"/><rect x="1285" y="359" width="16" height="8" fill="#70f"/><rect x="1301" y="359" width="8" height="8" fill="#80f"/><rect x="1309" y="359" width="8" height="8" fill="#90f"/><rect x="1317" y="359" width="8" height="8" fill="#90e"/><rect x="1325" y="359" width="32" height="8" fill="#809"/><rect x="1357" y="359" width="32" height="8" fill="#909"/><rect x="1389" y="359" width="32" height="8" fill="#908"/><rect x="1421" y="359" width="32" height="8" fill="#907"/><rect x="1453" y="359" width="40" height="8" fill="#906"/><rect x="1493" y="359" width="32" height="8" fill="#905"/><rect x="1093" y="367" width="24" height="8" fill="#059"/><rect x="1117" y="367" width="72" height="8" fill="#049"/><rect x="1189" y="367" width="8" height="8" fill="#02e"/><rect x="1197" y="367" width="8" height="8" fill="#02f"/><rect x="1205" y="367" width="8" height="8" fill="#12f"/><rect x="1213" y="367" width="16" height="8" fill="#22f"/><rect x="1229" y="367" width="24" height="8" fill="#31f"/><rect x="1253" y="367" width="8" height="8" fill="#41f"/><rect x="1261" y="367" width="8" height="8" fill="#40f"/><rect x="1269" y="367" width="16" height="8" fill="#50f"/><rect x="1285" y="367" width="8" height="8" fill="#60f"/><rect x="1293" y="367" width="16" height="8" fill="#70f"/><rect x="1309" y="367" width="8" height="8" fill="#80e"/><rect x="1317" y="367" width="16" height="8" fill="#709"/><rect x="1333" y="367" width="32" height="8" fill="#809"/><rect x="1365" y="367" width="32" height="8" fill="#909"/><rect x="1397" y="367" width="32" height="8" fill="#908"/><rect x="1429" y="367" width="40" height="8" fill="#907"/><rect x="1469" y="367" width="32" height="8" fill="#906"/><rect x="1501" y="367" width="16" height="8" fill="#905"/><rect x="1101" y="375" width="88" height="8" fill="#049"/><rect x="1189" y="375" width="8" height="8" fill="#02d"/><rect x="1197" y="375" width="8" height="8" fill="#02f"/><rect x="1205" y="375" width="8" height="8" fill="#12f"/><rect x="1213" y="375" width="8" height="8" fill="#22f"/><rect x="1221" y="375" width="16" height="8" fill="#21f"/><rect x="1237" y="375" width="16" height="8" fill="#31f"/><rect x="1253" y="375" width="8" height="8" fill="#30f"/><rect x="1261" y="375" width="16" height="8" fill="#40f"/><rect x="1277" y="375" width="16" height="8" fill="#50f"/><rect x="1293" y="375" width="8" height="8" fill="#60f"/><rect x="1301" y="375" width="8" height="8" fill="#70e"/><rect x="1309" y="375" width="32" height="8" fill="#709"/><rect x="1341" y="375" width="32" height="8" fill="#809"/><rect x="1373" y="375" width="32" height="8" fill="#909"/><rect x="1405" y="375" width="32" height="8" fill="#908"/><rect x="1437" y="375" width="40" height="8" fill="#907"/><rect x="1477" y="375" width="32" height="8" fill="#906"/><rect x="1101" y="383" width="88" height="8" fill="#049"/><rect x="1189" y="383" width="8" height="8" fill="#02c"/><rect x="1197" y="383" width="8" height="8" fill="#01f"/><rect x="1205" y="383" width="16" height="8" fill="#11f"/><rect x="1221" y="383" width="24" height="8" fill="#21f"/><rect x="1245" y="383" width="24" height="8" fill="#30f"/><rect x="1269" y="383" width="16" height="8" fill="#40f"/><rect x="1285" y="383" width="8" height="8" fill="#50f"/><rect x="1293" y="383" width="8" height="8" fill="#60e"/><rect x="1301" y="383" width="16" height="8" fill="#609"/><rect x="1317" y="383" width="32" height="8" fill="#709"/><rect x="1349" y="383" width="32" height="8" fill="#809"/><rect x="1381" y="383" width="32" height="8" fill="#909"/><rect x="1413" y="383" width="32" height="8" fill="#908"/><rect x="1445" y="383" width="40" height="8" fill="#907"/><rect x="1485" y="383" width="16" height="8" fill="#906"/><rect x="1109" y="391" width="32" height="8" fill="#049"/><rect x="1141" y="391" width="48" height="8" fill="#039"/><rect x="1189" y="391" width="8" height="8" fill="#02b"/><rect x="1197" y="391" width="16" height="8" fill="#01f"/><rect x="1213" y="391" width="16" height="8" fill="#11f"/><rect x="1229" y="391" width="8" height="8" fill="#21f"/><rect x="1237" y="391" width="16" height="8" fill="#20f"/><rect x="1253" y="391" width="24" height="8" fill="#30f"/><rect x="1277" y="391" width="8" height="8" fill="#40f"/><rect x="1285" y="391" width="8" height="8" fill="#50e"/><rect x="1293" y="391" width="32" height="8" fill="#609"/><rect x="1325" y="391" width="32" height="8" fill="#709"/><rect x="1357" y="391" width="32" height="8" fill="#809"/><rect x="1389" y="391" width="32" height="8" fill="#909"/><rect x="1421" y="391" width="32" height="8" fill="#908"/><rect x="1453" y="391" width="40" height="8" fill="#907"/><rect x="1109" y="399" width="80" height="8" fill="#039"/><rect x="1189" y="399" width="8" height="8" fill="#02b"/><rect x="1197" y="399" width="16" height="8" fill="#01f"/><rect x="1213" y="399" width="16" height="8" fill="#11f"/><rect x="1229" y="399" width="8" height="8" fill="#10f"/><rect x="1237" y="399" width="24" height="8" fill="#20f"/><rect x="1261" y="399" width="16" height="8" fill="#30f"/><rect x="1277" y="399" width="8" height="8" fill="#40e"/><rect x="1285" y="399" width="16" height="8" fill="#509"/><rect x="1301" y="399" width="32" height="8" fill="#609"/><rect x="1333" y="399" width="32" height="8" fill="#709"/><rect x="1365" y="399" width="32" height="8" fill="#809"/><rect x="1397" y="399" width="32" height="8" fill="#909"/><rect x="1429" y="399" width="32" height="8" fill="#908"/><rect x="1461" y="399" width="24" height="8" fill="#907"/><rect x="1485" y="399" width="8" height="8" fill="#a05"/><rect x="1117" y="407" width="72" height="8" fill="#039"/><rect x="1189" y="407" width="8" height="8" fill="#02a"/><rect x="1197" y="407" width="16" height="8" fill="#01f"/><rect x="1213" y="407" width="8" height="8" fill="#11f"/><rect x="1221" y="407" width="24" height="8" fill="#10f"/><rect x="1245" y="407" width="24" height="8" fill="#20f"/><rect x="1269" y="407" width="8" height="8" fill="#30e"/><rect x="1277" y="407" width="8" height="8" fill="#409"/><rect x="1285" y="407" width="24" height="8" fill="#509"/><rect x="1309" y="407" width="32" height="8" fill="#609"/><rect x="1341" y="407" width="32" height="8" fill="#709"/><rect x="1373" y="407" width="32" height="8" fill="#809"/><rect x="1405" y="407" width="32" height="8" fill="#909"/><rect x="1437" y="407" width="32" height="8" fill="#908"/><rect x="1469" y="407" width="16" height="8" fill="#907"/><rect x="1125" y="415" width="32" height="8" fill="#039"/><rect x="1157" y="415" width="40" height="8" fill="#029"/><rect x="1197" y="415" width="16" height="8" fill="#01f"/><rect x="1213" y="415" width="40" height="8" fill="#10f"/><rect x="1253" y="415" width="8" height="8" fill="#20f"/><rect x="1261" y="415" width="8" height="8" fill="#20e"/><rect x="1269" y="415" width="16" height="8" fill="#409"/><rect x="1285" y="415" width="32" height="8" fill="#509"/><rect x="1317" y="415" width="32" height="8" fill="#609"/><rect x="1349" y="415" width="32" height="8" fill="#709"/><rect x="1381" y="415" width="32" height="8" fill="#809"/><rect x="1413" y="415" width="32" height="8" fill="#909"/><rect x="1445" y="415" width="32" height="8" fill="#908"/><rect x="1125" y="423" width="72" height="8" fill="#029"/><rect x="1197" y="423" width="8" height="8" fill="#01e"/><rect x="1205" y="423" width="16" height="8" fill="#00f"/><rect x="1221" y="423" width="32" height="8" fill="#10f"/><rect x="1253" y="423" width="8" height="8" fill="#20e"/><rect x="1261" y="423" width="8" height="8" fill="#30a"/><rect x="1269" y="423" width="24" height="8" fill="#409"/><rect x="1293" y="423" width="32" height="8" fill="#509"/><rect x="1325" y="423" width="32" height="8" fill="#609"/><rect x="1357" y="423" width="32" height="8" fill="#709"/><rect x="1389" y="423" width="32" height="8" fill="#809"/><rect x="1421" y="423" width="32" height="8" fill="#909"/><rect x="1453" y="423" width="16" height="8" fill="#908"/><rect x="1133" y="431" width="64" height="8" fill="#029"/><rect x="1197" y="431" width="8" height="8" fill="#01d"/><rect x="1205" y="431" width="24" height="8" fill="#00f"/><rect x="1229" y="431" width="16" height="8" fill="#10f"/><rect x="1245" y="431" width="8" height="8" fill="#10e"/><rect x="1253" y="431" width="8" height="8" fill="#30a"/><rect x="1261" y="431" width="8" height="8" fill="#309"/><rect x="1269" y="431" width="32" height="8" fill="#409"/><rect x="1301" y="431" width="32" height="8" fill="#509"/><rect x="1333" y="431" width="32" height="8" fill="#609"/><rect x="1365" y="431" width="32" height="8" fill="#709"/><rect x="1397" y="431" width="32" height="8" fill="#809"/><rect x="1429" y="431" width="32" height="8" fill="#909"/><rect x="1133" y="439" width="48" height="8" fill="#029"/><rect x="1181" y="439" width="16" height="8" fill="#019"/><rect x="1197" y="439" width="8" height="8" fill="#01c"/><rect x="1205" y="439" width="32" height="8" fill="#00f"/><rect x="1237" y="439" width="8" height="8" fill="#10e"/><rect x="1245" y="439" width="8" height="8" fill="#20a"/><rect x="1253" y="439" width="24" height="8" fill="#309"/><rect x="1277" y="439" width="32" height="8" fill="#409"/><rect x="1309" y="439" width="32" height="8" fill="#509"/><rect x="1341" y="439" width="32" height="8" fill="#609"/><rect x="1373" y="439" width="32" height="8" fill="#709"/><rect x="1405" y="439" width="32" height="8" fill="#809"/><rect x="1437" y="439" width="16" height="8" fill="#909"/><rect x="1141" y="447" width="8" height="8" fill="#029"/><rect x="1149" y="447" width="48" height="8" fill="#019"/><rect x="1197" y="447" width="8" height="8" fill="#01b"/><rect x="1205" y="447" width="24" height="8" fill="#00f"/><rect x="1229" y="447" width="8" height="8" fill="#10e"/><rect x="1237" y="447" width="8" height="8" fill="#20a"/><rect x="1245" y="447" width="8" height="8" fill="#209"/><rect x="1253" y="447" width="32" height="8" fill="#309"/><rect x="1285" y="447" width="32" height="8" fill="#409"/><rect x="1317" y="447" width="32" height="8" fill="#509"/><rect x="1349" y="447" width="32" height="8" fill="#609"/><rect x="1381" y="447" width="32" height="8" fill="#709"/><rect x="1413" y="447" width="32" height="8" fill="#809"/><rect x="1149" y="455" width="48" height="8" fill="#019"/><rect x="1197" y="455" width="8" height="8" fill="#01a"/><rect x="1205" y="455" width="16" height="8" fill="#00f"/><rect x="1221" y="455" width="8" height="8" fill="#00e"/><rect x="1229" y="455" width="8" height="8" fill="#10a"/><rect x="1237" y="455" width="24" height="8" fill="#209"/><rect x="1261" y="455" width="32" height="8" fill="#309"/><rect x="1293" y="455" width="32" height="8" fill="#409"/><rect x="1325" y="455" width="32" height="8" fill="#509"/><rect x="1357" y="455" width="32" height="8" fill="#609"/><rect x="1389" y="455" width="32" height="8" fill="#709"/><rect x="1421" y="455" width="16" height="8" fill="#809"/><rect x="1149" y="463" width="8" height="8" fill="#00f"/><rect x="1157" y="463" width="48" height="8" fill="#019"/><rect x="1205" y="463" width="8" height="8" fill="#00f"/><rect x="1213" y="463" width="8" height="8" fill="#00e"/><rect x="1221" y="463" width="8" height="8" fill="#10a"/><rect x="1229" y="463" width="8" height="8" fill="#109"/><rect x="1237" y="463" width="32" height="8" fill="#209"/><rect x="1269" y="463" width="32" height="8" fill="#309"/><rect x="1301" y="463" width="32" height="8" fill="#409"/><rect x="1333" y="463" width="32" height="8" fill="#509"/><rect x="1365" y="463" width="32" height="8" fill="#609"/><rect x="1397" y="463" width="32" height="8" fill="#709"/><rect x="1157" y="471" width="8" height="8" fill="#019"/><rect x="1165" y="471" width="40" height="8" fill="#009"/><rect x="1205" y="471" width="8" height="8" fill="#00d"/><rect x="1213" y="471" width="8" height="8" fill="#00a"/><rect x="1221" y="471" width="24" height="8" fill="#109"/><rect x="1245" y="471" width="32" height="8" fill="#209"/><rect x="1277" y="471" width="32" height="8" fill="#309"/><rect x="1309" y="471" width="32" height="8" fill="#409"/><rect x="1341" y="471" width="32" height="8" fill="#509"/><rect x="1373" y="471" width="32" height="8" fill="#609"/><rect x="1405" y="471" width="16" height="8" fill="#709"/><rect x="1165" y="479" width="64" height="8" fill="#009"/><rect x="1229" y="479" width="24" height="8" fill="#109"/><rect x="1253" y="479" width="32" height="8" fill="#209"/><rect x="1285" y="479" width="32" height="8" fill="#309"/><rect x="1317" y="479" width="32" height="8" fill="#409"/><rect x="1349" y="479" width="32" height="8" fill="#509"/><rect x="1381" y="479" width="32" height="8" fill="#609"/><rect x="1173" y="487" width="64" height="8" fill="#009"/><rect x="1237" y="487" width="24" height="8" fill="#109"/><rect x="1261" y="487" width="32" height="8" fill="#209"/><rect x="1293" y="487" width="32" height="8" fill="#309"/><rect x="1325" y="487" width="32" height="8" fill="#409"/><rect x="1357" y="487" width="32" height="8" fill="#509"/><rect x="1389" y="487" width="16" height="8" fill="#609"/><rect x="1181" y="495" width="64" height="8" fill="#009"/><rect x="1245" y="495" width="32" height="8" fill="#109"/><rect x="1277" y="495" width="24" height="8" fill="#209"/><rect x="1301" y="495" width="32" height="8" fill="#309"/><rect x="1333" y="495" width="32" height="8" fill="#409"/><rect x="1365" y="495" width="32" height="8" fill="#509"/><rect x="1181" y="503" width="72" height="8" fill="#009"/><rect x="1253" y="503" width="32" height="8" fill="#109"/><rect x="1285" y="503" width="24" height="8" fill="#209"/><rect x="1309" y="503" width="32" height="8" fill="#309"/><rect x="1341" y="503" width="32" height="8" fill="#409"/><rect x="1373" y="503" width="16" height="8" fill="#509"/><rect x="1189" y="511" width="72" height="8" fill="#009"/><rect x="1261" y="511" width="32" height="8" fill="#109"/><rect x="1293" y="511" width="24" height="8" fill="#209"/><rect x="1317" y="511" width="32" height="8" fill="#309"/><rect x="1349" y="511" width="32" height="8" fill="#409"/><rect x="1197" y="519" width="72" height="8" fill="#009"/><rect x="1269" y="519" width="32" height="8" fill="#109"/><rect x="1301" y="519" width="24" height="8" fill="#209"/><rect x="1325" y="519" width="32" height="8" fill="#309"/><rect x="1357" y="519" width="16" height="8" fill="#409"/><rect x="1205" y="527" width="72" height="8" fill="#009"/><rect x="1277" y="527" width="32" height="8" fill="#109"/><rect x="1309" y="527" width="24" height="8" fill="#209"/><rect x="1333" y="527" width="32" height="8" fill="#309"/><rect x="1213" y="535" width="72" height="8" fill="#009"/><rect x="1285" y="535" width="32" height="8" fill="#109"/><rect x="1317" y="535" width="32" height="8" fill="#209"/><rect x="1349" y="535" width="8" height="8" fill="#309"/><rect x="1221" y="543" width="72" height="8" fill="#009"/><rect x="1293" y="543" width="32" height="8" fill="#109"/><rect x="1325" y="543" width="24" height="8" fill="#209"/><rect x="1229" y="551" width="72" height="8" fill="#009"/><rect x="1301" y="551" width="32" height="8" fill="#109"/><rect x="1333" y="551" width="8" height="8" fill="#209"/><rect x="1237" y="559" width="72" height="8" fill="#009"/><rect x="1309" y="559" width="24" height="8" fill="#109"/><rect x="1253" y="567" width="64" height="8" fill="#009"/><rect x="1317" y="567" width="8" height="8" fill="#109"/><rect x="1261" y="575" width="56" height="8" fill="#009"/><rect x="1269" y="583" width="40" height="8" fill="#009"/><rect x="1277" y="591" width="24" height="8" fill="#009"/></g></g></g><text x="17.5" y="711.4" font-size="27.6" fill="#f0f0f0" textLength="218.0" lengthAdjust="spacingAndGlyphs">Current Reading</text><text x="17.5" y="781.5" font-size="26" fill="#f0f0f0" textLength="101.5" lengthAdjust="spacingAndGlyphs">x: 0,3131</text><text x="174.0" y="781.5" font-size="26" fill="#f0f0f0" textLength="102.0" lengthAdjust="spacingAndGlyphs">y: 0,3302</text><text x="17.5" y="822.2" font-size="26" fill="#f0f0f0" textLength="75.5" lengthAdjust="spacingAndGlyphs">fL: 170</text><text x="17.5" y="862.0" font-size="26" fill="#f0f0f0" textLength="158.5" lengthAdjust="spacingAndGlyphs">cd/m²: 582,47</text><text x="427.8" y="680.0" font-size="14" fill="#e4e4e4" textLength="82.7" lengthAdjust="spacingAndGlyphs">RGB Balance</text><rect x="359" y="684" width="250" height="181" fill="#222222"/><rect x="359" y="703" width="250" height="1" fill="#a0a0a0"/><rect x="355" y="703" width="4" height="1" fill="#a0a0a0"/><text x="352.5" y="708.5" font-size="14" fill="#e4e4e4" text-anchor="end">104</text><rect x="359" y="740" width="250" height="1" fill="#a0a0a0"/><rect x="355" y="740" width="4" height="1" fill="#a0a0a0"/><text x="352.5" y="745.5" font-size="14" fill="#e4e4e4" text-anchor="end">102</text><rect x="359" y="776" width="250" height="1" fill="#a0a0a0"/><rect x="355" y="776" width="4" height="1" fill="#a0a0a0"/><text x="352.5" y="781.5" font-size="14" fill="#e4e4e4" text-anchor="end">100</text><rect x="359" y="812" width="250" height="1" fill="#a0a0a0"/><rect x="355" y="812" width="4" height="1" fill="#a0a0a0"/><text x="352.5" y="817.5" font-size="14" fill="#e4e4e4" text-anchor="end">98</text><rect x="359" y="848" width="250" height="1" fill="#a0a0a0"/><rect x="355" y="848" width="4" height="1" fill="#a0a0a0"/><text x="352.5" y="853.5" font-size="14" fill="#e4e4e4" text-anchor="end">96</text><rect x="359" y="684" width="251" height="1" fill="#a0a0a0"/><rect x="359" y="865" width="251" height="1" fill="#a0a0a0"/><rect x="359" y="684" width="1" height="182" fill="#a0a0a0"/><rect x="609" y="684" width="1" height="182" fill="#a0a0a0"/><rect x="359" y="865" width="1" height="6" fill="#a0a0a0"/><rect x="609" y="865" width="1" height="6" fill="#a0a0a0"/><defs><linearGradient id="rbr" x1="0" y1="0" x2="0" y2="1"><stop offset="0" stop-color="#ff5656"/><stop offset="1" stop-color="#ff4040"/></linearGradient><linearGradient id="rbg" x1="0" y1="0" x2="0" y2="1"><stop offset="0" stop-color="#56aa56"/><stop offset="1" stop-color="#3e9e3e"/></linearGradient><linearGradient id="rbb" x1="0" y1="0" x2="0" y2="1"><stop offset="0" stop-color="#5656ff"/><stop offset="1" stop-color="#4040ff"/></linearGradient></defs><rect x="384.5" y="778.8" width="65.0" height="86.4" fill="url(#rbr)" stroke="#000" stroke-width="1.3"/><rect x="450.5" y="774.8" width="65.0" height="90.4" fill="url(#rbg)" stroke="#000" stroke-width="1.3"/><rect x="516.8" y="782.9" width="65.5" height="82.3" fill="url(#rbb)" stroke="#000" stroke-width="1.3"/><text x="466.0" y="882.0" font-size="14" fill="#e4e4e4" textLength="37.8" lengthAdjust="spacingAndGlyphs">100W</text><text x="771.8" y="670.6" font-size="14" fill="#e4e4e4" textLength="75.4" lengthAdjust="spacingAndGlyphs">CIE 1931 xy</text><defs><linearGradient id="xyd" x1="640" y1="677" x2="980" y2="874" gradientUnits="userSpaceOnUse"><stop offset="0" stop-color="#5a9800"/><stop offset="0.5" stop-color="#919400"/><stop offset="1" stop-color="#8c5c00"/></linearGradient><linearGradient id="xyb" x1="640" y1="700" x2="980" y2="874" gradientUnits="userSpaceOnUse"><stop offset="0" stop-color="#a0ff00"/><stop offset="0.5" stop-color="#ffff00"/><stop offset="1" stop-color="#ffa200"/></linearGradient><linearGradient id="xyb2" x1="640" y1="874" x2="760" y2="760" gradientUnits="userSpaceOnUse"><stop offset="0" stop-color="#e8ff40" stop-opacity="0.5"/><stop offset="1" stop-color="#e8ff40" stop-opacity="0"/></linearGradient></defs><g id="xyfallback"><polygon points="640,677 980,677 980,853 640,697" fill="url(#xyd)"/><polygon points="640,697 980,853 980,874 640,874" fill="url(#xyb)"/></g><rect x="997" y="660" width="654" height="225" fill="#000000"/><rect x="998" y="661" width="651" height="224" fill="#333333"/><defs><linearGradient id="thg" x1="0" y1="0" x2="0" y2="1"><stop offset="0" stop-color="#333333"/><stop offset="0.48" stop-color="#2e2e2e"/><stop offset="0.5" stop-color="#161616"/><stop offset="1" stop-color="#141414"/></linearGradient><linearGradient id="hsg" x1="0" y1="0" x2="0" y2="1"><stop offset="0" stop-color="#4a4a4a"/><stop offset="1" stop-color="#6e6e6e"/></linearGradient><linearGradient id="vsg" x1="0" y1="0" x2="1" y2="0"><stop offset="0" stop-color="#4e4e4e"/><stop offset="1" stop-color="#6a6a6a"/></linearGradient><clipPath id="tclip"><rect x="998" y="661" width="634" height="204"/></clipPath></defs><rect x="998" y="661" width="634" height="34" fill="url(#thg)"/><text x="1130.0" y="685.0" font-size="18" fill="#f0f0f0" text-anchor="middle" textLength="42.0" lengthAdjust="spacingAndGlyphs">White</text><text x="1207.6" y="685.0" font-size="18" fill="#f0f0f0" text-anchor="middle" textLength="26.0" lengthAdjust="spacingAndGlyphs">Red</text><text x="1285.4" y="685.0" font-size="18" fill="#f0f0f0" text-anchor="middle" textLength="42.7" lengthAdjust="spacingAndGlyphs">Green</text><text x="1363.4" y="685.0" font-size="18" fill="#f0f0f0" text-anchor="middle" textLength="30.8" lengthAdjust="spacingAndGlyphs">Blue</text><text x="1441.3" y="685.0" font-size="18" fill="#f0f0f0" text-anchor="middle" textLength="33.5" lengthAdjust="spacingAndGlyphs">Cyan</text><text x="1519.2" y="685.0" font-size="18" fill="#f0f0f0" text-anchor="middle" textLength="61.2" lengthAdjust="spacingAndGlyphs">Magenta</text><text x="1597.2" y="685.0" font-size="18" fill="#f0f0f0" text-anchor="middle" textLength="44.8" lengthAdjust="spacingAndGlyphs">Yellow</text><g clip-path="url(#tclip)"><rect x="998" y="695" width="634" height="31" fill="#474747"/><text x="1011.0" y="718.0" font-size="19.5" fill="#f4f4f4" font-weight="bold" textLength="63.0" lengthAdjust="spacingAndGlyphs">x: CIE31</text><text x="1096.0" y="718.0" font-size="19.5" fill="#f0f0f0" textLength="51.0" lengthAdjust="spacingAndGlyphs">0,3096</text><text x="1173.8" y="718.0" font-size="19.5" fill="#f0f0f0" textLength="51.0" lengthAdjust="spacingAndGlyphs">0,6727</text><text x="1251.5" y="718.0" font-size="19.5" fill="#f0f0f0" textLength="51.0" lengthAdjust="spacingAndGlyphs">0,2642</text><text x="1329.2" y="718.0" font-size="19.5" fill="#f0f0f0" textLength="51.0" lengthAdjust="spacingAndGlyphs">0,1446</text><text x="1407.0" y="718.0" font-size="19.5" fill="#f0f0f0" textLength="51.0" lengthAdjust="spacingAndGlyphs">0,1966</text><text x="1484.8" y="718.0" font-size="19.5" fill="#f0f0f0" textLength="51.0" lengthAdjust="spacingAndGlyphs">0,3341</text><text x="1562.5" y="718.0" font-size="19.5" fill="#f0f0f0" textLength="51.0" lengthAdjust="spacingAndGlyphs">0,4353</text><rect x="998" y="726" width="634" height="31" fill="#7b7b7b"/><text x="1011.0" y="749.0" font-size="19.5" fill="#f4f4f4" font-weight="bold" textLength="63.0" lengthAdjust="spacingAndGlyphs">y: CIE31</text><text x="1096.0" y="749.0" font-size="19.5" fill="#f0f0f0" textLength="51.0" lengthAdjust="spacingAndGlyphs">0,3259</text><text x="1173.8" y="749.0" font-size="19.5" fill="#f0f0f0" textLength="51.0" lengthAdjust="spacingAndGlyphs">0,3216</text><text x="1251.5" y="749.0" font-size="19.5" fill="#f0f0f0" textLength="51.0" lengthAdjust="spacingAndGlyphs">0,6816</text><text x="1329.2" y="749.0" font-size="19.5" fill="#f0f0f0" textLength="51.0" lengthAdjust="spacingAndGlyphs">0,0509</text><text x="1407.0" y="749.0" font-size="19.5" fill="#f0f0f0" textLength="51.0" lengthAdjust="spacingAndGlyphs">0,3273</text><text x="1484.8" y="749.0" font-size="19.5" fill="#f0f0f0" textLength="51.0" lengthAdjust="spacingAndGlyphs">0,1477</text><text x="1562.5" y="749.0" font-size="19.5" fill="#f0f0f0" textLength="51.0" lengthAdjust="spacingAndGlyphs">0,5322</text><rect x="998" y="757" width="634" height="31" fill="#474747"/><text x="1011.0" y="780.0" font-size="19.5" fill="#f4f4f4" font-weight="bold" textLength="13.0" lengthAdjust="spacingAndGlyphs">Y</text><text x="1096.0" y="780.0" font-size="19.5" fill="#f0f0f0" textLength="69.0" lengthAdjust="spacingAndGlyphs">307,6000</text><text x="1173.8" y="780.0" font-size="19.5" fill="#f0f0f0" textLength="60.0" lengthAdjust="spacingAndGlyphs">71,7449</text><text x="1251.5" y="780.0" font-size="19.5" fill="#f0f0f0" textLength="69.0" lengthAdjust="spacingAndGlyphs">214,9337</text><text x="1329.2" y="780.0" font-size="19.5" fill="#f0f0f0" textLength="60.0" lengthAdjust="spacingAndGlyphs">20,5968</text><text x="1407.0" y="780.0" font-size="19.5" fill="#f0f0f0" textLength="69.0" lengthAdjust="spacingAndGlyphs">191,1950</text><text x="1484.8" y="780.0" font-size="19.5" fill="#f0f0f0" textLength="60.0" lengthAdjust="spacingAndGlyphs">75,3679</text><text x="1562.5" y="780.0" font-size="19.5" fill="#f0f0f0" textLength="69.0" lengthAdjust="spacingAndGlyphs">233,4616</text><rect x="998" y="788" width="634" height="31" fill="#7b7b7b"/><text x="1011.0" y="811.0" font-size="19.5" fill="#f4f4f4" font-weight="bold" textLength="66.6" lengthAdjust="spacingAndGlyphs">Target Y</text><text x="1096.0" y="811.0" font-size="19.5" fill="#f0f0f0" textLength="69.0" lengthAdjust="spacingAndGlyphs">303,4621</text><text x="1173.8" y="811.0" font-size="19.5" fill="#f0f0f0" textLength="60.0" lengthAdjust="spacingAndGlyphs">64,5330</text><text x="1251.5" y="811.0" font-size="19.5" fill="#f0f0f0" textLength="69.0" lengthAdjust="spacingAndGlyphs">217,0235</text><text x="1329.2" y="811.0" font-size="19.5" fill="#f0f0f0" textLength="60.0" lengthAdjust="spacingAndGlyphs">21,9056</text><text x="1407.0" y="811.0" font-size="19.5" fill="#f0f0f0" textLength="69.0" lengthAdjust="spacingAndGlyphs">238,9291</text><text x="1484.8" y="811.0" font-size="19.5" fill="#f0f0f0" textLength="60.0" lengthAdjust="spacingAndGlyphs">86,4386</text><text x="1562.5" y="811.0" font-size="19.5" fill="#f0f0f0" textLength="69.0" lengthAdjust="spacingAndGlyphs">281,5565</text><rect x="998" y="819" width="634" height="31" fill="#474747"/><text x="1011.0" y="842.0" font-size="19.5" fill="#f4f4f4" font-weight="bold" textLength="66.0" lengthAdjust="spacingAndGlyphs">ΔE 2000</text><text x="1096.0" y="842.0" font-size="19.5" fill="#f0f0f0" textLength="51.0" lengthAdjust="spacingAndGlyphs">1,4445</text><text x="1173.8" y="842.0" font-size="19.5" fill="#f0f0f0" textLength="51.0" lengthAdjust="spacingAndGlyphs">4,3648</text><text x="1251.5" y="842.0" font-size="19.5" fill="#f0f0f0" textLength="51.0" lengthAdjust="spacingAndGlyphs">4,8929</text><text x="1329.2" y="842.0" font-size="19.5" fill="#f0f0f0" textLength="51.0" lengthAdjust="spacingAndGlyphs">2,0351</text><text x="1407.0" y="842.0" font-size="19.5" fill="#f0f0f0" textLength="51.0" lengthAdjust="spacingAndGlyphs">6,0423</text><text x="1484.8" y="842.0" font-size="19.5" fill="#f0f0f0" textLength="51.0" lengthAdjust="spacingAndGlyphs">2,9780</text><text x="1562.5" y="842.0" font-size="19.5" fill="#f0f0f0" textLength="51.0" lengthAdjust="spacingAndGlyphs">5,3076</text><rect x="998" y="850" width="634" height="31" fill="#7b7b7b"/><text x="1011.0" y="873.0" font-size="19.5" fill="#f4f4f4" font-weight="bold" textLength="52.0" lengthAdjust="spacingAndGlyphs">ΔE ITP</text><text x="1096.0" y="873.0" font-size="19.5" fill="#f0f0f0" textLength="51.0" lengthAdjust="spacingAndGlyphs">2,1763</text><text x="1173.8" y="873.0" font-size="19.5" fill="#f0f0f0" textLength="60.0" lengthAdjust="spacingAndGlyphs">36,0838</text><text x="1251.5" y="873.0" font-size="19.5" fill="#f0f0f0" textLength="60.0" lengthAdjust="spacingAndGlyphs">32,0320</text><text x="1329.2" y="873.0" font-size="19.5" fill="#f0f0f0" textLength="60.0" lengthAdjust="spacingAndGlyphs">17,0005</text><text x="1407.0" y="873.0" font-size="19.5" fill="#f0f0f0" textLength="60.0" lengthAdjust="spacingAndGlyphs">25,0183</text><text x="1484.8" y="873.0" font-size="19.5" fill="#f0f0f0" textLength="60.0" lengthAdjust="spacingAndGlyphs">24,6100</text><text x="1562.5" y="873.0" font-size="19.5" fill="#f0f0f0" textLength="60.0" lengthAdjust="spacingAndGlyphs">28,3581</text></g><rect x="1632" y="695" width="17" height="170" fill="url(#vsg)" rx="3"/><rect x="1633.5" y="697" width="14" height="16" rx="3" fill="#6c6c6c" stroke="#7a7a7a" stroke-width="1"/><path d="M1635.5,708 L1645.5,708 L1640.5,702.5 Z" fill="#3a3a3a"/><rect x="1634.5" y="717" width="12" height="104" rx="6" fill="#3e3e3e"/><rect x="1633.5" y="847" width="14" height="16" rx="3" fill="#6c6c6c" stroke="#7a7a7a" stroke-width="1"/><path d="M1635.5,852 L1645.5,852 L1640.5,857.5 Z" fill="#3a3a3a"/><rect x="998" y="865" width="634" height="20" fill="url(#hsg)"/><rect x="1000" y="867" width="14" height="16" rx="3" fill="#707070" stroke="#7c7c7c" stroke-width="1"/><path d="M1004,875 L1010,869.5 L1010,880.5 Z" fill="#3a3a3a"/><rect x="1018" y="867.5" width="526" height="15" rx="7" fill="#3e3e3e"/><rect x="1617" y="867" width="14" height="16" rx="3" fill="#707070" stroke="#7c7c7c" stroke-width="1"/><path d="M1627,875 L1621,869.5 L1621,880.5 Z" fill="#3a3a3a"/><rect x="1632" y="865" width="17" height="20" fill="#333333"/><line x1="997.5" y1="660" x2="997.5" y2="885" stroke="#000" stroke-width="1.2"/><line x1="1650" y1="660" x2="1650" y2="885" stroke="#000" stroke-width="1.2"/><defs><linearGradient id="bb" x1="0" y1="0" x2="0" y2="1"><stop offset="0" stop-color="#ababab"/><stop offset="0.15" stop-color="#9a9a9a"/><stop offset="0.6" stop-color="#6e6e6e"/><stop offset="1" stop-color="#5e5e5e"/></linearGradient><linearGradient id="bsel" x1="0" y1="0" x2="0" y2="1"><stop offset="0" stop-color="#1e1e1e"/><stop offset="1" stop-color="#303030"/></linearGradient><linearGradient id="swsh" x1="0" y1="0" x2="0" y2="1"><stop offset="0" stop-color="#000" stop-opacity="0.35"/><stop offset="0.08" stop-color="#000" stop-opacity="0.1"/><stop offset="0.2" stop-color="#000" stop-opacity="0"/></linearGradient><linearGradient id="cbg" x1="0" y1="0" x2="0" y2="1"><stop offset="0" stop-color="#b0b0b0"/><stop offset="1" stop-color="#6c6c6c"/></linearGradient><linearGradient id="icg" x1="0" y1="0" x2="0" y2="1"><stop offset="0" stop-color="#7e7e7e"/><stop offset="1" stop-color="#b4b4b4"/></linearGradient></defs><rect x="3.5" y="928.5" width="155.5" height="75.5" rx="5" fill="url(#bb)"/><rect x="9.5" y="934.8" width="143.5" height="45.2" rx="4.5" fill="#c0c0c0"/><rect x="9.5" y="934.8" width="143.5" height="45.2" rx="4.5" fill="url(#swsh)"/><text x="81.2" y="998.5" font-size="13.5" fill="#262626" font-weight="bold" text-anchor="middle" textLength="36.0" lengthAdjust="spacingAndGlyphs">White</text><rect x="161.4" y="928.5" width="155.5" height="75.5" rx="5" fill="url(#bb)"/><rect x="167.4" y="934.8" width="143.5" height="45.2" rx="4.5" fill="#bb0000"/><rect x="167.4" y="934.8" width="143.5" height="45.2" rx="4.5" fill="url(#swsh)"/><text x="239.2" y="998.5" font-size="13.5" fill="#262626" font-weight="bold" text-anchor="middle" textLength="22.6" lengthAdjust="spacingAndGlyphs">Red</text><rect x="319.4" y="928.5" width="155.5" height="75.5" rx="5" fill="url(#bb)"/><rect x="325.4" y="934.8" width="143.5" height="45.2" rx="4.5" fill="#00bb00"/><rect x="325.4" y="934.8" width="143.5" height="45.2" rx="4.5" fill="url(#swsh)"/><text x="397.1" y="998.5" font-size="13.5" fill="#262626" font-weight="bold" text-anchor="middle" textLength="38.0" lengthAdjust="spacingAndGlyphs">Green</text><rect x="477.3" y="928.5" width="155.5" height="75.5" rx="5" fill="url(#bb)"/><rect x="483.3" y="934.8" width="143.5" height="45.2" rx="4.5" fill="#0000bb"/><rect x="483.3" y="934.8" width="143.5" height="45.2" rx="4.5" fill="url(#swsh)"/><text x="555.1" y="998.5" font-size="13.5" fill="#262626" font-weight="bold" text-anchor="middle" textLength="28.0" lengthAdjust="spacingAndGlyphs">Blue</text><rect x="635.3" y="928.5" width="155.5" height="75.5" rx="5" fill="url(#bb)"/><rect x="641.3" y="934.8" width="143.5" height="45.2" rx="4.5" fill="#00bbbb"/><rect x="641.3" y="934.8" width="143.5" height="45.2" rx="4.5" fill="url(#swsh)"/><text x="713.0" y="998.5" font-size="13.5" fill="#262626" font-weight="bold" text-anchor="middle" textLength="31.0" lengthAdjust="spacingAndGlyphs">Cyan</text><rect x="793.2" y="928.5" width="155.5" height="75.5" rx="5" fill="url(#bb)"/><rect x="799.2" y="934.8" width="143.5" height="45.2" rx="4.5" fill="#bb00bb"/><rect x="799.2" y="934.8" width="143.5" height="45.2" rx="4.5" fill="url(#swsh)"/><text x="871.0" y="998.5" font-size="13.5" fill="#262626" font-weight="bold" text-anchor="middle" textLength="55.0" lengthAdjust="spacingAndGlyphs">Magenta</text><rect x="951.2" y="928.5" width="155.5" height="75.5" rx="5" fill="url(#bb)"/><rect x="957.2" y="934.8" width="143.5" height="45.2" rx="4.5" fill="#bbbb00"/><rect x="957.2" y="934.8" width="143.5" height="45.2" rx="4.5" fill="url(#swsh)"/><text x="1028.9" y="998.5" font-size="13.5" fill="#262626" font-weight="bold" text-anchor="middle" textLength="41.0" lengthAdjust="spacingAndGlyphs">Yellow</text><rect x="1109.1" y="928.5" width="155.5" height="75.5" rx="5" fill="url(#bsel)"/><rect x="1115.1" y="934.8" width="143.5" height="45.2" rx="4.5" fill="#ffffff"/><rect x="1115.1" y="934.8" width="143.5" height="45.2" rx="4.5" fill="url(#swsh)"/><text x="1186.9" y="998.5" font-size="13.5" fill="#ffffff" font-weight="bold" text-anchor="middle" textLength="36.0" lengthAdjust="spacingAndGlyphs">100W</text><rect x="1267.5" y="928.5" width="61" height="80" rx="5" fill="#6e6e6e"/><rect x="1267.5" y="928.5" width="61" height="23" rx="5" fill="url(#cbg)"/><rect x="1267.5" y="952.5" width="61" height="56" fill="url(#cbg)"/><line x1="1267.5" y1="951.8" x2="1328.5" y2="951.8" stroke="#3a3a3a" stroke-width="1.3"/><circle cx="1298.5" cy="939.5" r="10.5" fill="url(#icg)"/><path d="M1292.5,943 L1304.5,943 L1298.5,936.5 Z" fill="#2e2e2e"/><rect x="1279.5" y="960" width="38" height="37.5" rx="6" fill="#999999" stroke="#1e1e1e" stroke-width="2.5"/><rect x="1282" y="962.5" width="33" height="16" rx="4" fill="#a6a6a6"/><rect x="1290" y="970" width="17" height="17" fill="#050505"/><rect x="1328.8" y="928" width="283.2" height="38" fill="url(#cbg)"/><line x1="1387.4" y1="928" x2="1387.4" y2="966" stroke="#2a2a2a" stroke-width="1.5"/><line x1="1443.3" y1="928" x2="1443.3" y2="966" stroke="#2a2a2a" stroke-width="1.5"/><line x1="1499.8" y1="928" x2="1499.8" y2="966" stroke="#2a2a2a" stroke-width="1.5"/><line x1="1556.4" y1="928" x2="1556.4" y2="966" stroke="#2a2a2a" stroke-width="1.5"/><line x1="1328.8" y1="966.3" x2="1668" y2="966.3" stroke="#2a2a2a" stroke-width="1.5"/><circle cx="1358" cy="946.5" r="12" fill="url(#icg)"/><circle cx="1415" cy="946.5" r="12" fill="url(#icg)"/><circle cx="1472" cy="946.5" r="12" fill="url(#icg)"/><circle cx="1528" cy="946.5" r="12" fill="url(#icg)"/><circle cx="1584" cy="946.5" r="12" fill="url(#icg)"/><rect x="1353" y="942" width="10" height="9.5" fill="#262626"/><path d="M1412,941 L1412,954 L1422,947.5 Z" fill="#262626"/><path d="M1466,941.5 L1464.5,941.5 L1464.5,953 L1466,953 M1478,941.5 L1479.5,941.5 L1479.5,953 L1478,953" fill="none" stroke="#262626" stroke-width="2"/><circle cx="1469.5" cy="947" r="1" fill="#262626"/><circle cx="1474" cy="947" r="1" fill="#262626"/><path d="M1528,946.5 C1525,942 1520,942 1520,946.5 C1520,951 1525,951 1528,946.5 C1531,942 1536,942 1536,946.5 C1536,951 1531,951 1528,946.5 Z" fill="none" stroke="#262626" stroke-width="2.2"/><path d="M1577.5,948 A6.5,6.5 0 0 1 1589,942.5 M1590.5,945 A6.5,6.5 0 0 1 1579,950.5" fill="none" stroke="#262626" stroke-width="2.2"/><path d="M1586.5,940 L1591.5,940 L1591.5,945 Z M1581.5,953 L1576.5,953 L1576.5,948 Z" fill="#262626"/><rect x="1328.8" y="967" width="339.2" height="40" fill="url(#cbg)"/><defs><linearGradient id="nxsh" x1="0" y1="0" x2="1" y2="0"><stop offset="0" stop-color="#000" stop-opacity="0"/><stop offset="1" stop-color="#000" stop-opacity="0.35"/></linearGradient></defs><rect x="1660" y="967" width="8" height="40" fill="url(#nxsh)"/><line x1="1500.2" y1="967" x2="1500.2" y2="1005" stroke="#2a2a2a" stroke-width="1.5"/><circle cx="1368" cy="986" r="12" fill="url(#icg)"/><path d="M1367,980.5 L1362,986 L1367,991.5 M1372,980.5 L1367,986 L1372,991.5" fill="none" stroke="#262626" stroke-width="1.8"/><circle cx="1635" cy="986" r="12" fill="url(#icg)"/><path d="M1631,980.5 L1636,986 L1631,991.5 M1636,980.5 L1641,986 L1636,991.5" fill="none" stroke="#262626" stroke-width="1.8"/><text x="1401.5" y="996.0" font-size="28.8" fill="#333333" textLength="63.0" lengthAdjust="spacingAndGlyphs" stroke="#333333" stroke-width="0.9">Back</text><text x="1535.5" y="996.0" font-size="28.8" fill="#333333" textLength="64.0" lengthAdjust="spacingAndGlyphs" stroke="#333333" stroke-width="0.9">Next</text><g filter="url(#ashad)"><rect x="1637" y="929" width="6.5" height="32" rx="1" fill="#e00000" transform="rotate(0 1640.2 945)"/><rect x="1637" y="929" width="6.5" height="32" rx="1" fill="#e00000" transform="rotate(60 1640.2 945)"/><rect x="1637" y="929" width="6.5" height="32" rx="1" fill="#e00000" transform="rotate(120 1640.2 945)"/></g><defs><filter id="ashad" x="-30%" y="-30%" width="160%" height="160%"><feDropShadow dx="0.8" dy="1" stdDeviation="0.8" flood-color="#000" flood-opacity="0.6"/></filter></defs><rect x="1663" y="37" width="8" height="968" fill="url(#redge)"/></svg>
<canvas id="cie" width="639" height="491"></canvas>
<canvas id="xyc" width="340" height="197"></canvas>
<svg width="1671" height="1005" viewBox="0 0 1671 1005" font-family='"Liberation Sans", sans-serif' style="pointer-events:none"><circle cx="1540.3" cy="179.3" r="4.5" fill="#c80000" stroke="#000" stroke-width="1.2"/><circle cx="1126.1" cy="137.4" r="4.5" fill="#00c000" stroke="#000" stroke-width="1.2"/><circle cx="1205.9" cy="496.8" r="4.5" fill="#0000c0" stroke="#000" stroke-width="1.2"/><circle cx="1148.6" cy="240.1" r="4.5" fill="#00b0b0" stroke="#000" stroke-width="1.2"/><circle cx="1367.3" cy="344.2" r="4.5" fill="#b000b0" stroke="#000" stroke-width="1.2"/><circle cx="1238.3" cy="148.5" r="4.5" fill="#c8c800" stroke="#000" stroke-width="1.2"/><rect x="1494.1" y="174.5" width="13" height="13" fill="none" stroke="#ffffff" stroke-width="1.6"/><rect x="1147.1" y="142.0" width="13" height="13" fill="none" stroke="#ffffff" stroke-width="1.6"/><rect x="1200.8" y="473.9" width="13" height="13" fill="none" stroke="#ffffff" stroke-width="1.6"/><rect x="1161.2" y="229.8" width="13" height="13" fill="none" stroke="#ffffff" stroke-width="1.6"/><rect x="1339.0" y="332.9" width="13" height="13" fill="none" stroke="#ffffff" stroke-width="1.6"/><rect x="1231.1" y="149.9" width="13" height="13" fill="none" stroke="#ffffff" stroke-width="1.6"/><rect x="1224.2" y="219" width="12.8" height="13" fill="#f2f2f2" stroke="#000" stroke-width="2"/><circle cx="1230.5" cy="227.3" r="4.1" fill="#b8b8b8" stroke="#000" stroke-width="1"/><circle cx="1230.5" cy="224.6" r="4.1" fill="#ffffff" stroke="#000" stroke-width="1"/><rect x="639.5" y="676.5" width="341" height="198" fill="none" stroke="#a8a8a8" stroke-width="1"/><circle cx="788" cy="787" r="4.3" fill="#c4c4c8" stroke="#111" stroke-width="1.2"/><rect x="802.3" y="768.1" width="13.5" height="12.8" fill="none" stroke="#000" stroke-width="2"/><circle cx="810.8" cy="770.5" r="4" fill="#ffffff" stroke="#111" stroke-width="1"/><rect x="1404.5" y="578" width="253" height="28" fill="#2a2a2a"/><text x="1405.5" y="600.0" font-size="20" fill="#f4f4f4" textLength="156.0" lengthAdjust="spacingAndGlyphs">Gamut Coverage:</text><text x="1573.0" y="600.0" font-size="20" fill="#f4f4f4" textLength="65.5" lengthAdjust="spacingAndGlyphs">134,7%</text></svg>
<script>
(function(){
function shade(id, OX, OY, map, spans, dim, gam, powout){
  var cv=document.getElementById(id); if(!cv||!cv.getContext) return false;
  var ctx=cv.getContext('2d'); var W=cv.width,H=cv.height;
  function P(q){var m=map(q[0],q[1]); return [m[0]-OX,m[1]-OY];}
  var T=[[0.4507,0.5229],[0.2039,0.5529],[0.1250,0.5625],[0.1383,0.4555],[0.1754,0.1579],[0.3051,0.3297]];
  var V=T.map(P), Wp=P([0.1978,0.4683]);
  var Cc=[[255,0,0],[255,255,0],[0,255,0],[0,255,255],[0,0,255],[255,0,255]];
  var dimg=Math.pow(dim,1/gam);
  var img=ctx.createImageData(W,H), d=img.data;
  var TE=[[V[0],V[2]],[V[2],V[4]],[V[4],V[0]]].map(function(e){var dx=e[1][0]-e[0][0],dy=e[1][1]-e[0][1],L=Math.sqrt(dx*dx+dy*dy);return [e[0][0],e[0][1],dx/L,dy/L];});
  var out=[0,0,0];
  function colorAt(px,py){
    var r=0,g=0,bl=0,found=false;
    for(var s=0;s<6;s++){
      var A=Wp,B=V[s],C=V[(s+1)%6];
      var det=(B[1]-C[1])*(A[0]-C[0])+(C[0]-B[0])*(A[1]-C[1]);
      var l1=((B[1]-C[1])*(px-C[0])+(C[0]-B[0])*(py-C[1]))/det;
      var l2=((C[1]-A[1])*(px-C[0])+(A[0]-C[0])*(py-C[1]))/det;
      var l3=1-l1-l2;
      if(l1>=-1e-9&&l2>=-1e-9&&l3>=-1e-9){
        var cb=Cc[s],cc=Cc[(s+1)%6];
        r=l1*255+l2*cb[0]+l3*cc[0]; g=l1*255+l2*cb[1]+l3*cc[1]; bl=l1*255+l2*cb[2]+l3*cc[2]; found=true; break;}
    }
    if(found){ r=255*Math.pow(r/255,gam); g=255*Math.pow(g/255,gam); bl=255*Math.pow(bl/255,gam); }
    else{
      var best=1e18,bt=0,bs=0;
      for(var s=0;s<6;s++){var A=V[s],B=V[(s+1)%6];
        var dx=B[0]-A[0],dy=B[1]-A[1]; var t=((px-A[0])*dx+(py-A[1])*dy)/(dx*dx+dy*dy); if(t<0)t=0; if(t>1)t=1;
        var ex=A[0]+t*dx-px, ey=A[1]+t*dy-py, dd=ex*ex+ey*ey; if(dd<best){best=dd;bt=t;bs=s;}}
      var ca=Cc[bs],cb2=Cc[(bs+1)%6];
      r=ca[0]+(cb2[0]-ca[0])*bt; g=ca[1]+(cb2[1]-ca[1])*bt; bl=ca[2]+(cb2[2]-ca[2])*bt;
      if(powout){ r=255*Math.pow(r/255*dimg,gam); g=255*Math.pow(g/255*dimg,gam); bl=255*Math.pow(bl/255*dimg,gam); }
      else { r*=dim; g*=dim; bl*=dim; }
    }
    out[0]=r; out[1]=g; out[2]=bl;
  }
  for(var y=0;y<H;y++){
    var py=y+0.5, sp=spans?spans(py):[[0,W]];
    for(var k=0;k<sp.length;k++){
      var xa=sp[k][0], xb=sp[k][1];
      var x0=Math.max(0,Math.floor(xa)), x1=Math.min(W-1,Math.ceil(xb)-1);
      for(var x=x0;x<=x1;x++){
        var cov=Math.min(x+1,xb)-Math.max(x,xa); if(cov<=0) continue; if(cov>1)cov=1;
        var px=x+0.5, near=false;
        for(var e=0;e<3;e++){var q=TE[e]; var dist=Math.abs((px-q[0])*q[3]-(py-q[1])*q[2]); if(dist<1.0){near=true;break;}}
        var r,g,bl;
        if(near){
          r=0;g=0;bl=0;
          for(var sy=0;sy<4;sy++)for(var sx=0;sx<4;sx++){colorAt(x+(sx+0.5)/4,y+(sy+0.5)/4); r+=out[0];g+=out[1];bl+=out[2];}
          r/=16;g/=16;bl/=16;
        } else { colorAt(px,py); r=out[0];g=out[1];bl=out[2]; }
        var o=(y*W+x)*4; d[o]=r; d[o+1]=g; d[o+2]=bl; d[o+3]=Math.round(255*cov);
      }
    }
  }
  ctx.putImageData(img,0,0);
  return true;
}
// CIE 1976 u'v'
var PX0=1020.8,PY0=610.0,SX=1065,SY=818.5;
var L=[[0.2537,0.0159],[0.2536,0.0160],[0.2534,0.0161],[0.2531,0.0163],[0.2528,0.0164],[0.2525,0.0166],[0.2522,0.0169],[0.2518,0.0172],[0.2515,0.0175],[0.2510,0.0178],[0.2506,0.0182],[0.2501,0.0187],[0.2496,0.0191],[0.2491,0.0196],[0.2486,0.0201],[0.2480,0.0207],[0.2474,0.0213],[0.2468,0.0219],[0.2461,0.0226],[0.2454,0.0234],[0.2446,0.0242],[0.2438,0.0251],[0.2429,0.0260],[0.2420,0.0269],[0.2411,0.0279],[0.2401,0.0290],[0.2391,0.0301],[0.2381,0.0313],[0.2370,0.0325],[0.2359,0.0337],[0.2347,0.0350],[0.2335,0.0363],[0.2322,0.0377],[0.2309,0.0391],[0.2296,0.0405],[0.2281,0.0421],[0.2266,0.0437],[0.2250,0.0454],[0.2234,0.0471],[0.2216,0.0490],[0.2198,0.0509],[0.2180,0.0529],[0.2161,0.0549],[0.2141,0.0571],[0.2121,0.0592],[0.2100,0.0614],[0.2079,0.0637],[0.2057,0.0662],[0.2033,0.0688],[0.2009,0.0715],[0.1985,0.0743],[0.1959,0.0773],[0.1933,0.0804],[0.1905,0.0836],[0.1877,0.0871],[0.1848,0.0907],[0.1819,0.0944],[0.1789,0.0982],[0.1758,0.1024],[0.1725,0.1069],[0.1690,0.1119],[0.1652,0.1175],[0.1613,0.1234],[0.1572,0.1297],[0.1529,0.1364],[0.1486,0.1435],[0.1441,0.1510],[0.1395,0.1589],[0.1347,0.1672],[0.1298,0.1760],[0.1248,0.1851],[0.1198,0.1946],[0.1147,0.2044],[0.1095,0.2146],[0.1042,0.2254],[0.0988,0.2364],[0.0934,0.2478],[0.0881,0.2593],[0.0828,0.2708],[0.0776,0.2825],[0.0723,0.2945],[0.0670,0.3066],[0.0618,0.3187],[0.0568,0.3308],[0.0521,0.3427],[0.0477,0.3545],[0.0434,0.3663],[0.0392,0.3780],[0.0353,0.3896],[0.0316,0.4008],[0.0282,0.4117],[0.0249,0.4222],[0.0219,0.4324],[0.0191,0.4424],[0.0164,0.4520],[0.0141,0.4611],[0.0119,0.4698],[0.0100,0.4781],[0.0083,0.4858],[0.0068,0.4932],[0.0055,0.5002],[0.0044,0.5068],[0.0035,0.5131],[0.0027,0.5190],[0.0021,0.5244],[0.0017,0.5295],[0.0015,0.5343],[0.0014,0.5388],[0.0014,0.5432],[0.0016,0.5472],[0.0020,0.5510],[0.0024,0.5546],[0.0031,0.5579],[0.0038,0.5609],[0.0046,0.5638],[0.0056,0.5665],[0.0067,0.5690],[0.0080,0.5713],[0.0093,0.5733],[0.0108,0.5752],[0.0123,0.5770],[0.0139,0.5785],[0.0156,0.5798],[0.0174,0.5810],[0.0192,0.5820],[0.0212,0.5829],[0.0231,0.5837],[0.0251,0.5843],[0.0272,0.5849],[0.0294,0.5853],[0.0315,0.5856],[0.0338,0.5859],[0.0360,0.5861],[0.0383,0.5864],[0.0406,0.5865],[0.0429,0.5866],[0.0453,0.5867],[0.0477,0.5867],[0.0501,0.5868],[0.0524,0.5868],[0.0548,0.5868],[0.0571,0.5867],[0.0595,0.5867],[0.0619,0.5866],[0.0643,0.5865],[0.0668,0.5864],[0.0692,0.5863],[0.0717,0.5861],[0.0742,0.5860],[0.0767,0.5858],[0.0792,0.5856],[0.0818,0.5854],[0.0844,0.5852],[0.0871,0.5849],[0.0898,0.5847],[0.0925,0.5844],[0.0953,0.5841],[0.0981,0.5838],[0.1009,0.5835],[0.1038,0.5832],[0.1067,0.5828],[0.1097,0.5824],[0.1127,0.5821],[0.1158,0.5817],[0.1189,0.5813],[0.1220,0.5809],[0.1253,0.5804],[0.1285,0.5800],[0.1319,0.5796],[0.1353,0.5791],[0.1387,0.5786],[0.1422,0.5781],[0.1458,0.5776],[0.1494,0.5771],[0.1531,0.5766],[0.1569,0.5761],[0.1607,0.5755],[0.1645,0.5749],[0.1685,0.5744],[0.1725,0.5738],[0.1766,0.5732],[0.1807,0.5726],[0.1850,0.5720],[0.1893,0.5713],[0.1936,0.5707],[0.1981,0.5700],[0.2026,0.5694],[0.2072,0.5687],[0.2118,0.5680],[0.2166,0.5673],[0.2214,0.5666],[0.2262,0.5658],[0.2312,0.5651],[0.2362,0.5644],[0.2413,0.5636],[0.2464,0.5628],[0.2517,0.5620],[0.2570,0.5612],[0.2623,0.5604],[0.2678,0.5596],[0.2733,0.5588],[0.2789,0.5580],[0.2845,0.5571],[0.2902,0.5563],[0.2960,0.5554],[0.3018,0.5545],[0.3076,0.5537],[0.3136,0.5528],[0.3195,0.5519],[0.3255,0.5510],[0.3315,0.5501],[0.3376,0.5492],[0.3437,0.5483],[0.3498,0.5474],[0.3559,0.5464],[0.3620,0.5455],[0.3681,0.5446],[0.3740,0.5437],[0.3800,0.5428],[0.3859,0.5420],[0.3918,0.5411],[0.3976,0.5402],[0.4035,0.5393],[0.4093,0.5385],[0.4152,0.5376],[0.4210,0.5367],[0.4267,0.5359],[0.4324,0.5350],[0.4379,0.5342],[0.4434,0.5334],[0.4487,0.5326],[0.4540,0.5318],[0.4592,0.5310],[0.4642,0.5303],[0.4692,0.5296],[0.4740,0.5288],[0.4788,0.5281],[0.4835,0.5274],[0.4880,0.5267],[0.4924,0.5261],[0.4968,0.5254],[0.5010,0.5248],[0.5050,0.5242],[0.5090,0.5236],[0.5129,0.5230],[0.5166,0.5224],[0.5203,0.5219],[0.5238,0.5214],[0.5272,0.5209],[0.5305,0.5204],[0.5337,0.5199],[0.5369,0.5194],[0.5399,0.5190],[0.5429,0.5185],[0.5458,0.5181],[0.5485,0.5177],[0.5513,0.5173],[0.5539,0.5169],[0.5565,0.5165],[0.5591,0.5161],[0.5615,0.5157],[0.5640,0.5154],[0.5663,0.5150],[0.5686,0.5147],[0.5709,0.5143],[0.5731,0.5140],[0.5752,0.5137],[0.5772,0.5134],[0.5792,0.5131],[0.5812,0.5128],[0.5830,0.5125],[0.5848,0.5122],[0.5866,0.5120],[0.5882,0.5117],[0.5898,0.5115],[0.5914,0.5113],[0.5929,0.5111],[0.5943,0.5109],[0.5956,0.5107],[0.5969,0.5105],[0.5982,0.5103],[0.5993,0.5101],[0.6005,0.5099],[0.6016,0.5098],[0.6027,0.5096],[0.6037,0.5095],[0.6046,0.5093],[0.6056,0.5092],[0.6064,0.5090],[0.6073,0.5089],[0.6081,0.5088],[0.6088,0.5087],[0.6096,0.5086],[0.6102,0.5085],[0.6109,0.5084],[0.6115,0.5083],[0.6120,0.5082],[0.6125,0.5081],[0.6129,0.5081],[0.6133,0.5080],[0.6138,0.5079],[0.6142,0.5079],[0.6146,0.5078],[0.6150,0.5077],[0.6154,0.5077],[0.6158,0.5076],[0.6162,0.5076],[0.6165,0.5075],[0.6168,0.5075],[0.6171,0.5074],[0.6174,0.5074],[0.6177,0.5073],[0.6180,0.5073],[0.6183,0.5072],[0.6187,0.5072],[0.6190,0.5072],[0.6193,0.5071],[0.6196,0.5071],[0.6199,0.5070],[0.6202,0.5070],[0.6205,0.5069],[0.6208,0.5069],[0.6210,0.5068],[0.6213,0.5068],[0.6215,0.5068],[0.6217,0.5067],[0.6219,0.5067],[0.6221,0.5067],[0.6223,0.5067],[0.6224,0.5066],[0.6226,0.5066],[0.6227,0.5066],[0.6228,0.5066],[0.6229,0.5066],[0.6230,0.5066],[0.6231,0.5065],[0.6231,0.5065],[0.6232,0.5065],[0.6232,0.5065],[0.6233,0.5065],[0.6233,0.5065],[0.6234,0.5065],[0.6234,0.5065]];
var OX=1021,OY=119;
var LP=L.map(function(q){return [PX0+q[0]*SX-OX, PY0-q[1]*SY-OY];});
function locusSpans(py){
  var xs=[];
  for(var i=0;i<LP.length;i++){var a=LP[i],b=LP[(i+1)%LP.length];
    if((a[1]<=py&&b[1]>py)||(b[1]<=py&&a[1]>py)){xs.push(a[0]+(py-a[1])/(b[1]-a[1])*(b[0]-a[0]));}}
  xs.sort(function(p,q){return p-q;});
  var r=[]; for(var k=0;k+1<xs.length;k+=2) r.push([xs[k],xs[k+1]]); return r;
}
if(shade('cie',OX,OY,function(u,v){return [PX0+u*SX, PY0-v*SY];},null,0.6,2.4,false)){
  var cx2=document.getElementById('cie').getContext('2d');
  cx2.globalCompositeOperation='destination-in'; cx2.beginPath(); cx2.moveTo(LP[0][0],LP[0][1]);
  for(var i=1;i<LP.length;i++) cx2.lineTo(LP[i][0],LP[i][1]); cx2.closePath(); cx2.fillStyle='#000'; cx2.fill();
  cx2.globalCompositeOperation='source-over';
  var fb=document.getElementById('fallback'); if(fb) fb.parentNode.removeChild(fb);
}
// CIE 1931 xy (zoomed)
function uv2xy(u,v){var dd=6*u-16*v+12; return [9*u/dd, 4*v/dd];}
var XC=0.4193, YC=0.5053, D=0.055, CX=810, CY=775.5;
if(shade('xyc',640,677,function(u,v){var q=uv2xy(u,v); return [CX+(q[0]-XC)/D*341, CY-(q[1]-YC)/D*198];},null,0.6,2.2,true)){
  var fb2=document.getElementById('xyfallback'); if(fb2) fb2.parentNode.removeChild(fb2);
}
})();
</script>
</body></html>
